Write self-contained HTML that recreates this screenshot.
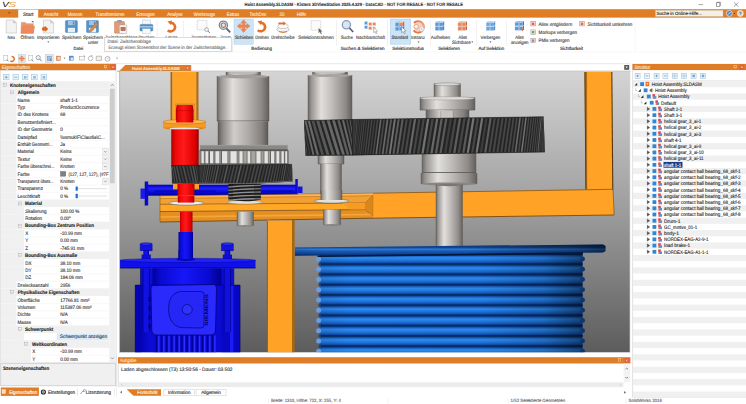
<!DOCTYPE html>
<html lang="de"><head><meta charset="utf-8"><title>Hoist Assembly.SLDASM - Kisters 3DViewStation</title>
<style>html,body{margin:0;padding:0;background:#fff;overflow:hidden}svg{display:block}</style>
</head><body>
<svg width="746" height="404" viewBox="0 0 746 404" font-family="'Liberation Sans', sans-serif" text-rendering="geometricPrecision">
<defs>
<linearGradient id="bg" x1="0" y1="0" x2="0" y2="1"><stop offset="0" stop-color="#d4d4d4"/><stop offset="0.5" stop-color="#9c9c9c"/><stop offset="1" stop-color="#5c5c5c"/></linearGradient>
<linearGradient id="cyl" x1="0" y1="0" x2="1" y2="0"><stop offset="0" stop-color="#6a6764"/><stop offset="0.08" stop-color="#9a9794"/><stop offset="0.3" stop-color="#e2e0dd"/><stop offset="0.55" stop-color="#bebbb8"/><stop offset="0.85" stop-color="#8e8b88"/><stop offset="1" stop-color="#63605d"/></linearGradient>
<linearGradient id="cyl2" x1="0" y1="0" x2="1" y2="0"><stop offset="0" stop-color="#605d5a"/><stop offset="0.1" stop-color="#8e8b88"/><stop offset="0.32" stop-color="#cfccc9"/><stop offset="0.6" stop-color="#aeaba8"/><stop offset="0.88" stop-color="#827f7c"/><stop offset="1" stop-color="#5a5754"/></linearGradient>
<linearGradient id="red" x1="0" y1="0" x2="1" y2="0"><stop offset="0" stop-color="#b00000"/><stop offset="0.15" stop-color="#f00808"/><stop offset="0.45" stop-color="#ff1a1a"/><stop offset="0.85" stop-color="#e00000"/><stop offset="1" stop-color="#a00000"/></linearGradient>
<linearGradient id="blu" x1="0" y1="0" x2="1" y2="0"><stop offset="0" stop-color="#00009a"/><stop offset="0.12" stop-color="#0a0ad0"/><stop offset="0.45" stop-color="#1616fa"/><stop offset="0.8" stop-color="#0a0ad4"/><stop offset="1" stop-color="#000090"/></linearGradient>
<linearGradient id="bluv" x1="0" y1="0" x2="0" y2="1"><stop offset="0" stop-color="#0000b8"/><stop offset="0.35" stop-color="#2020ff"/><stop offset="0.7" stop-color="#0808d0"/><stop offset="1" stop-color="#000090"/></linearGradient>
<linearGradient id="org" x1="0" y1="0" x2="1" y2="0"><stop offset="0" stop-color="#ffa024"/><stop offset="1" stop-color="#ff9c1c"/></linearGradient>
<linearGradient id="groove" x1="0" y1="0" x2="0" y2="1"><stop offset="0" stop-color="#041c46"/><stop offset="0.07" stop-color="#0a3a86"/><stop offset="0.2" stop-color="#1a66cc"/><stop offset="0.36" stop-color="#3090f4"/><stop offset="0.5" stop-color="#2480e4"/><stop offset="0.72" stop-color="#1a68d0"/><stop offset="0.87" stop-color="#0e48a0"/><stop offset="0.95" stop-color="#062a64"/><stop offset="1" stop-color="#041c46"/></linearGradient>
<linearGradient id="drumsh" x1="0" y1="0" x2="1" y2="0"><stop offset="0" stop-color="#000" stop-opacity="0.1"/><stop offset="0.12" stop-color="#000" stop-opacity="0"/><stop offset="0.62" stop-color="#000" stop-opacity="0.02"/><stop offset="0.85" stop-color="#000" stop-opacity="0.18"/><stop offset="1" stop-color="#000" stop-opacity="0.48"/></linearGradient>
<linearGradient id="flgsh" x1="0" y1="0" x2="1" y2="0"><stop offset="0" stop-color="#000" stop-opacity="0.1"/><stop offset="0.1" stop-color="#000" stop-opacity="0"/><stop offset="0.55" stop-color="#000" stop-opacity="0.02"/><stop offset="0.9" stop-color="#000" stop-opacity="0.38"/><stop offset="1" stop-color="#000" stop-opacity="0.58"/></linearGradient>
<linearGradient id="flg" x1="0" y1="0" x2="0" y2="1"><stop offset="0" stop-color="#0a2f6c"/><stop offset="0.3" stop-color="#114a9c"/><stop offset="0.42" stop-color="#2e80de"/><stop offset="0.55" stop-color="#1a60bc"/><stop offset="0.85" stop-color="#0e4290"/><stop offset="1" stop-color="#062456"/></linearGradient>
<pattern id="gr" x="0" y="264.3" width="40" height="10.25" patternUnits="userSpaceOnUse"><rect width="40" height="10.25" fill="url(#groove)"/></pattern>
<clipPath id="vp"><rect x="120" y="72" width="510" height="280.5"/></clipPath>
</defs>
<rect x="0.00" y="0.00" width="746.00" height="404.00" fill="#fff"/>
<g clip-path="url(#vp)">
<rect x="120.00" y="72.00" width="510.00" height="281.00" fill="url(#bg)"/>
<polygon points="584.50,71.00 587.50,71.00 587.50,190.00 585.50,190.00" fill="#b06a14"/>
<polygon points="587.30,71.00 611.50,71.00 612.50,190.00 587.30,190.00" fill="#ffa226"/>
<line x1="611.80" y1="71.00" x2="612.80" y2="190.00" stroke="#5a3608" stroke-width="1.10"/>
<line x1="584.90" y1="71.00" x2="585.90" y2="190.00" stroke="#5a3608" stroke-width="0.90"/>
<polygon points="170.50,71.00 172.60,71.00 172.60,124.00 170.50,124.00" fill="#a8660f"/>
<rect x="172.40" y="71.00" width="24.10" height="53.00" fill="#ffa226"/>
<rect x="196.30" y="71.00" width="2.20" height="53.00" fill="#b56a14"/>
<rect x="226.00" y="70.00" width="34.50" height="7.00" fill="url(#cyl)"/>
<line x1="226.00" y1="70.00" x2="226.00" y2="77.00" stroke="#55524f" stroke-width="0.40"/>
<line x1="260.50" y1="70.00" x2="260.50" y2="77.00" stroke="#55524f" stroke-width="0.40"/>
<ellipse cx="243.2" cy="73" rx="15" ry="1.6" fill="#bdbab6"/>
<rect x="217.00" y="76.00" width="52.00" height="45.00" fill="url(#cyl)"/>
<line x1="217.00" y1="76.00" x2="217.00" y2="121.00" stroke="#55524f" stroke-width="0.40"/>
<line x1="269.00" y1="76.00" x2="269.00" y2="121.00" stroke="#55524f" stroke-width="0.40"/>
<ellipse cx="243" cy="76.6" rx="26" ry="1.8" fill="#a29f9b"/>
<line x1="217.00" y1="121.00" x2="269.00" y2="121.00" stroke="#4a4846" stroke-width="0.70"/>
<rect x="218.00" y="121.30" width="50.00" height="23.70" fill="url(#cyl2)"/>
<line x1="218.00" y1="121.30" x2="218.00" y2="145.00" stroke="#55524f" stroke-width="0.40"/>
<line x1="268.00" y1="121.30" x2="268.00" y2="145.00" stroke="#55524f" stroke-width="0.40"/>
<rect x="312.50" y="70.00" width="35.00" height="6.00" fill="url(#cyl)"/>
<line x1="312.50" y1="70.00" x2="312.50" y2="76.00" stroke="#55524f" stroke-width="0.40"/>
<line x1="347.50" y1="70.00" x2="347.50" y2="76.00" stroke="#55524f" stroke-width="0.40"/>
<ellipse cx="330" cy="72.5" rx="15" ry="1.4" fill="#c4c1bd"/>
<rect x="308.00" y="75.00" width="44.00" height="46.00" fill="url(#cyl)"/>
<line x1="308.00" y1="75.00" x2="308.00" y2="121.00" stroke="#55524f" stroke-width="0.40"/>
<line x1="352.00" y1="75.00" x2="352.00" y2="121.00" stroke="#55524f" stroke-width="0.40"/>
<ellipse cx="330" cy="75.6" rx="22" ry="1.5" fill="#a8a5a1"/>
<rect x="434.00" y="83.50" width="26.50" height="14.50" fill="url(#cyl)"/>
<line x1="434.00" y1="83.50" x2="434.00" y2="98.00" stroke="#55524f" stroke-width="0.40"/>
<line x1="460.50" y1="83.50" x2="460.50" y2="98.00" stroke="#55524f" stroke-width="0.40"/>
<ellipse cx="447.2" cy="84.3" rx="13" ry="1.5" fill="#d8d6d3" stroke="#77736f" stroke-width="0.4"/>
<rect x="420.00" y="97.50" width="55.00" height="12.50" fill="url(#cyl)"/>
<line x1="420.00" y1="97.50" x2="420.00" y2="110.00" stroke="#55524f" stroke-width="0.40"/>
<line x1="475.00" y1="97.50" x2="475.00" y2="110.00" stroke="#55524f" stroke-width="0.40"/>
<ellipse cx="447.5" cy="98.3" rx="27.3" ry="1.6" fill="#dddbd8" stroke="#77736f" stroke-width="0.3"/>
<line x1="420.00" y1="110.00" x2="475.00" y2="110.00" stroke="#55524f" stroke-width="0.60"/>
<rect x="426.00" y="110.00" width="43.00" height="10.00" fill="url(#cyl2)"/>
<line x1="426.00" y1="110.00" x2="426.00" y2="120.00" stroke="#55524f" stroke-width="0.40"/>
<line x1="469.00" y1="110.00" x2="469.00" y2="120.00" stroke="#55524f" stroke-width="0.40"/>
<line x1="441.00" y1="111.00" x2="441.00" y2="119.00" stroke="#6a6662" stroke-width="0.50"/>
<line x1="453.00" y1="111.00" x2="453.00" y2="119.00" stroke="#6a6662" stroke-width="0.50"/>
<rect x="441.20" y="111.00" width="11.60" height="8.00" fill="#c9c6c2"/>
<rect x="318.00" y="154.00" width="26.00" height="10.00" fill="url(#cyl)"/>
<line x1="318.00" y1="154.00" x2="318.00" y2="164.00" stroke="#55524f" stroke-width="0.40"/>
<line x1="344.00" y1="154.00" x2="344.00" y2="164.00" stroke="#55524f" stroke-width="0.40"/>
<line x1="318.00" y1="164.00" x2="344.00" y2="164.00" stroke="#5a5754" stroke-width="0.50"/>
<rect x="320.50" y="164.00" width="21.00" height="35.50" fill="url(#cyl)"/>
<line x1="320.50" y1="164.00" x2="320.50" y2="199.50" stroke="#55524f" stroke-width="0.40"/>
<line x1="341.50" y1="164.00" x2="341.50" y2="199.50" stroke="#55524f" stroke-width="0.40"/>
<rect x="422.00" y="153.00" width="54.00" height="19.50" fill="url(#cyl)"/>
<line x1="422.00" y1="153.00" x2="422.00" y2="172.50" stroke="#55524f" stroke-width="0.40"/>
<line x1="476.00" y1="153.00" x2="476.00" y2="172.50" stroke="#55524f" stroke-width="0.40"/>
<line x1="422.00" y1="172.50" x2="476.00" y2="172.50" stroke="#4a4744" stroke-width="0.70"/>
<rect x="421.00" y="173.00" width="56.00" height="11.00" fill="url(#cyl)"/>
<line x1="421.00" y1="173.00" x2="421.00" y2="184.00" stroke="#55524f" stroke-width="0.40"/>
<line x1="477.00" y1="173.00" x2="477.00" y2="184.00" stroke="#55524f" stroke-width="0.40"/>
<ellipse cx="449" cy="184" rx="28" ry="1.5" fill="#8a8682"/>
<clipPath id="g1"><polygon points="304.00,120.50 352.50,119.50 352.50,155.20 305.50,155.60"/></clipPath>
<polygon points="304.00,120.50 352.50,119.50 352.50,155.20 305.50,155.60" fill="#242424"/>
<g clip-path="url(#g1)">
<line x1="301.21" y1="118.00" x2="305.90" y2="157.00" stroke="#505050" stroke-width="0.35"/>
<line x1="301.29" y1="118.00" x2="307.60" y2="157.00" stroke="#505050" stroke-width="0.79"/>
<line x1="302.51" y1="118.00" x2="310.33" y2="157.00" stroke="#3e3e3e" stroke-width="1.37"/>
<line x1="304.79" y1="118.00" x2="313.97" y2="157.00" stroke="#686868" stroke-width="1.88"/>
<line x1="308.05" y1="118.00" x2="318.37" y2="157.00" stroke="#686868" stroke-width="2.31"/>
<line x1="312.13" y1="118.00" x2="323.33" y2="157.00" stroke="#505050" stroke-width="2.64"/>
<line x1="316.86" y1="118.00" x2="328.63" y2="157.00" stroke="#5a5a5a" stroke-width="2.86"/>
<line x1="322.04" y1="118.00" x2="334.03" y2="157.00" stroke="#5e5e5e" stroke-width="2.94"/>
<line x1="327.43" y1="118.00" x2="339.31" y2="157.00" stroke="#686868" stroke-width="2.90"/>
<line x1="332.79" y1="118.00" x2="344.23" y2="157.00" stroke="#686868" stroke-width="2.73"/>
<line x1="337.90" y1="118.00" x2="348.57" y2="157.00" stroke="#5e5e5e" stroke-width="2.44"/>
<line x1="342.52" y1="118.00" x2="352.14" y2="157.00" stroke="#686868" stroke-width="2.05"/>
<line x1="346.46" y1="118.00" x2="354.79" y2="157.00" stroke="#505050" stroke-width="1.56"/>
<line x1="349.53" y1="118.00" x2="356.40" y2="157.00" stroke="#5a5a5a" stroke-width="1.01"/>
<line x1="351.62" y1="118.00" x2="356.89" y2="157.00" stroke="#5a5a5a" stroke-width="0.41"/>
</g>
<clipPath id="g2"><polygon points="352.50,119.50 543.50,116.80 545.00,152.00 352.50,155.20"/></clipPath>
<polygon points="352.50,119.50 543.50,116.80 545.00,152.00 352.50,155.20" fill="#242424"/>
<g clip-path="url(#g2)">
<line x1="352.77" y1="115.00" x2="350.25" y2="157.00" stroke="#3e3e3e" stroke-width="0.35"/>
<line x1="353.04" y1="115.00" x2="350.32" y2="157.00" stroke="#474747" stroke-width="0.35"/>
<line x1="353.54" y1="115.00" x2="350.60" y2="157.00" stroke="#747474" stroke-width="0.35"/>
<line x1="354.24" y1="115.00" x2="351.09" y2="157.00" stroke="#474747" stroke-width="0.35"/>
<line x1="355.16" y1="115.00" x2="351.79" y2="157.00" stroke="#5a5a5a" stroke-width="0.46"/>
<line x1="356.28" y1="115.00" x2="352.71" y2="157.00" stroke="#474747" stroke-width="0.56"/>
<line x1="357.61" y1="115.00" x2="353.83" y2="157.00" stroke="#5a5a5a" stroke-width="0.67"/>
<line x1="359.14" y1="115.00" x2="355.16" y2="157.00" stroke="#3e3e3e" stroke-width="0.77"/>
<line x1="360.88" y1="115.00" x2="356.70" y2="157.00" stroke="#3e3e3e" stroke-width="0.87"/>
<line x1="362.81" y1="115.00" x2="358.43" y2="157.00" stroke="#474747" stroke-width="0.96"/>
<line x1="364.93" y1="115.00" x2="360.36" y2="157.00" stroke="#474747" stroke-width="1.06"/>
<line x1="367.24" y1="115.00" x2="362.48" y2="157.00" stroke="#3e3e3e" stroke-width="1.15"/>
<line x1="369.73" y1="115.00" x2="364.79" y2="157.00" stroke="#474747" stroke-width="1.25"/>
<line x1="372.40" y1="115.00" x2="367.29" y2="157.00" stroke="#474747" stroke-width="1.33"/>
<line x1="375.24" y1="115.00" x2="369.95" y2="157.00" stroke="#3e3e3e" stroke-width="1.42"/>
<line x1="378.24" y1="115.00" x2="372.79" y2="157.00" stroke="#474747" stroke-width="1.50"/>
<line x1="381.40" y1="115.00" x2="375.80" y2="157.00" stroke="#686868" stroke-width="1.58"/>
<line x1="384.71" y1="115.00" x2="378.96" y2="157.00" stroke="#474747" stroke-width="1.66"/>
<line x1="388.17" y1="115.00" x2="382.27" y2="157.00" stroke="#686868" stroke-width="1.73"/>
<line x1="391.76" y1="115.00" x2="385.73" y2="157.00" stroke="#5a5a5a" stroke-width="1.80"/>
<line x1="395.48" y1="115.00" x2="389.32" y2="157.00" stroke="#747474" stroke-width="1.86"/>
<line x1="399.32" y1="115.00" x2="393.04" y2="157.00" stroke="#5e5e5e" stroke-width="1.92"/>
<line x1="403.27" y1="115.00" x2="396.88" y2="157.00" stroke="#5e5e5e" stroke-width="1.98"/>
<line x1="407.33" y1="115.00" x2="400.83" y2="157.00" stroke="#474747" stroke-width="2.03"/>
<line x1="411.47" y1="115.00" x2="404.88" y2="157.00" stroke="#474747" stroke-width="2.07"/>
<line x1="415.70" y1="115.00" x2="409.03" y2="157.00" stroke="#686868" stroke-width="2.12"/>
<line x1="420.01" y1="115.00" x2="413.26" y2="157.00" stroke="#474747" stroke-width="2.15"/>
<line x1="424.38" y1="115.00" x2="417.57" y2="157.00" stroke="#474747" stroke-width="2.19"/>
<line x1="428.81" y1="115.00" x2="421.94" y2="157.00" stroke="#747474" stroke-width="2.21"/>
<line x1="433.29" y1="115.00" x2="426.37" y2="157.00" stroke="#474747" stroke-width="2.24"/>
<line x1="437.80" y1="115.00" x2="430.85" y2="157.00" stroke="#686868" stroke-width="2.26"/>
<line x1="442.33" y1="115.00" x2="435.36" y2="157.00" stroke="#5e5e5e" stroke-width="2.27"/>
<line x1="446.89" y1="115.00" x2="439.89" y2="157.00" stroke="#5a5a5a" stroke-width="2.28"/>
<line x1="451.45" y1="115.00" x2="444.45" y2="157.00" stroke="#3e3e3e" stroke-width="2.28"/>
<line x1="456.00" y1="115.00" x2="449.01" y2="157.00" stroke="#474747" stroke-width="2.28"/>
<line x1="460.55" y1="115.00" x2="453.56" y2="157.00" stroke="#5e5e5e" stroke-width="2.27"/>
<line x1="465.06" y1="115.00" x2="458.11" y2="157.00" stroke="#474747" stroke-width="2.26"/>
<line x1="469.55" y1="115.00" x2="462.62" y2="157.00" stroke="#5a5a5a" stroke-width="2.24"/>
<line x1="473.99" y1="115.00" x2="467.11" y2="157.00" stroke="#747474" stroke-width="2.22"/>
<line x1="478.38" y1="115.00" x2="471.55" y2="157.00" stroke="#474747" stroke-width="2.19"/>
<line x1="482.70" y1="115.00" x2="475.93" y2="157.00" stroke="#747474" stroke-width="2.16"/>
<line x1="486.95" y1="115.00" x2="480.26" y2="157.00" stroke="#3e3e3e" stroke-width="2.12"/>
<line x1="491.12" y1="115.00" x2="484.51" y2="157.00" stroke="#5e5e5e" stroke-width="2.08"/>
<line x1="495.20" y1="115.00" x2="488.68" y2="157.00" stroke="#474747" stroke-width="2.04"/>
<line x1="499.17" y1="115.00" x2="492.75" y2="157.00" stroke="#474747" stroke-width="1.99"/>
<line x1="503.04" y1="115.00" x2="496.73" y2="157.00" stroke="#474747" stroke-width="1.93"/>
<line x1="506.79" y1="115.00" x2="500.60" y2="157.00" stroke="#474747" stroke-width="1.87"/>
<line x1="510.41" y1="115.00" x2="504.35" y2="157.00" stroke="#474747" stroke-width="1.81"/>
<line x1="513.90" y1="115.00" x2="507.97" y2="157.00" stroke="#474747" stroke-width="1.74"/>
<line x1="517.25" y1="115.00" x2="511.46" y2="157.00" stroke="#474747" stroke-width="1.67"/>
<line x1="520.45" y1="115.00" x2="514.81" y2="157.00" stroke="#686868" stroke-width="1.60"/>
<line x1="523.49" y1="115.00" x2="518.01" y2="157.00" stroke="#474747" stroke-width="1.52"/>
<line x1="526.37" y1="115.00" x2="521.05" y2="157.00" stroke="#747474" stroke-width="1.44"/>
<line x1="529.08" y1="115.00" x2="523.93" y2="157.00" stroke="#474747" stroke-width="1.35"/>
<line x1="531.62" y1="115.00" x2="526.64" y2="157.00" stroke="#474747" stroke-width="1.27"/>
<line x1="533.97" y1="115.00" x2="529.17" y2="157.00" stroke="#474747" stroke-width="1.18"/>
<line x1="536.14" y1="115.00" x2="531.53" y2="157.00" stroke="#474747" stroke-width="1.08"/>
<line x1="538.12" y1="115.00" x2="533.70" y2="157.00" stroke="#474747" stroke-width="0.99"/>
<line x1="539.90" y1="115.00" x2="535.67" y2="157.00" stroke="#474747" stroke-width="0.89"/>
<line x1="541.48" y1="115.00" x2="537.45" y2="157.00" stroke="#747474" stroke-width="0.79"/>
<line x1="542.86" y1="115.00" x2="539.04" y2="157.00" stroke="#474747" stroke-width="0.69"/>
<line x1="544.04" y1="115.00" x2="540.42" y2="157.00" stroke="#474747" stroke-width="0.59"/>
<line x1="545.00" y1="115.00" x2="541.59" y2="157.00" stroke="#5e5e5e" stroke-width="0.48"/>
<line x1="545.76" y1="115.00" x2="542.56" y2="157.00" stroke="#474747" stroke-width="0.38"/>
<line x1="546.30" y1="115.00" x2="543.31" y2="157.00" stroke="#5a5a5a" stroke-width="0.35"/>
<line x1="546.64" y1="115.00" x2="543.86" y2="157.00" stroke="#686868" stroke-width="0.35"/>
<line x1="546.75" y1="115.00" x2="544.19" y2="157.00" stroke="#474747" stroke-width="0.35"/>
</g>
<line x1="352.50" y1="119.50" x2="352.50" y2="155.20" stroke="#111" stroke-width="0.60"/>
<line x1="304.00" y1="120.50" x2="352.50" y2="119.50" stroke="#111" stroke-width="0.50"/>
<line x1="352.50" y1="119.50" x2="543.50" y2="116.80" stroke="#111" stroke-width="0.50"/>
<line x1="305.50" y1="155.40" x2="352.50" y2="155.00" stroke="#151515" stroke-width="0.60"/>
<line x1="352.50" y1="155.00" x2="545.00" y2="152.00" stroke="#151515" stroke-width="0.60"/>
<rect x="200.20" y="145.00" width="87.40" height="4.60" fill="#8a8886"/>
<line x1="200.20" y1="145.30" x2="287.60" y2="145.30" stroke="#a9a7a4" stroke-width="0.60"/>
<line x1="200.20" y1="149.60" x2="287.60" y2="149.60" stroke="#4a4846" stroke-width="0.70"/>
<rect x="199.80" y="150.00" width="88.40" height="14.40" fill="#a6a4a1"/>
<rect x="200.60" y="151.20" width="0.90" height="12.40" fill="#5e5c5a"/>
<rect x="201.50" y="151.20" width="2.40" height="12.40" fill="#e4e3e1"/>
<rect x="203.90" y="151.20" width="1.40" height="12.40" fill="#8a8886"/>
<rect x="204.60" y="151.20" width="0.90" height="12.40" fill="#5e5c5a"/>
<rect x="205.50" y="151.20" width="2.60" height="12.40" fill="#e4e3e1"/>
<rect x="208.10" y="151.20" width="1.40" height="12.40" fill="#8a8886"/>
<rect x="209.10" y="151.20" width="0.90" height="12.40" fill="#5e5c5a"/>
<rect x="210.00" y="151.20" width="3.20" height="12.40" fill="#e4e3e1"/>
<rect x="213.20" y="151.20" width="1.40" height="12.40" fill="#8a8886"/>
<rect x="214.60" y="151.20" width="0.90" height="12.40" fill="#5e5c5a"/>
<rect x="215.50" y="151.20" width="3.80" height="12.40" fill="#e4e3e1"/>
<rect x="219.30" y="151.20" width="1.40" height="12.40" fill="#8a8886"/>
<rect x="221.10" y="151.20" width="0.90" height="12.40" fill="#5e5c5a"/>
<rect x="222.00" y="151.20" width="5.40" height="12.40" fill="#e4e3e1"/>
<rect x="227.40" y="151.20" width="1.40" height="12.40" fill="#8a8886"/>
<rect x="229.60" y="151.20" width="0.90" height="12.40" fill="#5e5c5a"/>
<rect x="230.50" y="151.20" width="6.20" height="12.40" fill="#e4e3e1"/>
<rect x="236.70" y="151.20" width="1.40" height="12.40" fill="#8a8886"/>
<rect x="238.60" y="151.20" width="0.90" height="12.40" fill="#5e5c5a"/>
<rect x="239.50" y="151.20" width="3.20" height="12.40" fill="#e4e3e1"/>
<rect x="242.70" y="151.20" width="1.40" height="12.40" fill="#8a8886"/>
<rect x="246.70" y="151.20" width="0.90" height="12.40" fill="#5e5c5a"/>
<rect x="247.60" y="151.20" width="2.60" height="12.40" fill="#e4e3e1"/>
<rect x="250.20" y="151.20" width="1.40" height="12.40" fill="#8a8886"/>
<rect x="255.60" y="151.20" width="0.90" height="12.40" fill="#5e5c5a"/>
<rect x="256.50" y="151.20" width="4.20" height="12.40" fill="#e4e3e1"/>
<rect x="260.70" y="151.20" width="1.40" height="12.40" fill="#8a8886"/>
<rect x="263.60" y="151.20" width="0.90" height="12.40" fill="#5e5c5a"/>
<rect x="264.50" y="151.20" width="3.40" height="12.40" fill="#e4e3e1"/>
<rect x="267.90" y="151.20" width="1.40" height="12.40" fill="#8a8886"/>
<rect x="270.10" y="151.20" width="0.90" height="12.40" fill="#5e5c5a"/>
<rect x="271.00" y="151.20" width="3.20" height="12.40" fill="#e4e3e1"/>
<rect x="274.20" y="151.20" width="1.40" height="12.40" fill="#8a8886"/>
<rect x="275.60" y="151.20" width="0.90" height="12.40" fill="#5e5c5a"/>
<rect x="276.50" y="151.20" width="2.80" height="12.40" fill="#e4e3e1"/>
<rect x="279.30" y="151.20" width="1.40" height="12.40" fill="#8a8886"/>
<rect x="280.60" y="151.20" width="0.90" height="12.40" fill="#5e5c5a"/>
<rect x="281.50" y="151.20" width="2.40" height="12.40" fill="#e4e3e1"/>
<rect x="283.90" y="151.20" width="1.40" height="12.40" fill="#8a8886"/>
<rect x="284.40" y="151.20" width="0.90" height="12.40" fill="#5e5c5a"/>
<rect x="285.30" y="151.20" width="1.80" height="12.40" fill="#e4e3e1"/>
<rect x="287.10" y="151.20" width="1.40" height="12.40" fill="#8a8886"/>
<line x1="199.80" y1="150.60" x2="288.20" y2="150.60" stroke="#4a4846" stroke-width="0.90"/>
<line x1="199.80" y1="164.00" x2="288.20" y2="164.00" stroke="#3a3836" stroke-width="0.90"/>
<line x1="199.80" y1="150.00" x2="199.80" y2="164.40" stroke="#55524f" stroke-width="0.50"/>
<line x1="288.20" y1="150.00" x2="288.20" y2="164.40" stroke="#55524f" stroke-width="0.50"/>
<rect x="175.00" y="104.00" width="20.00" height="17.50" fill="#e8932a"/>
<line x1="175.00" y1="104.00" x2="195.00" y2="104.00" stroke="#a8660f" stroke-width="0.40"/>
<path d="M177.6,105 h14.2 q1,0 1.1,1 l0.6,4.4 v11 h-17.6 v-11 l0.6,-4.4 q0.1,-1 1.1,-1 z" fill="url(#red)"/>
<line x1="176.00" y1="110.60" x2="193.50" y2="110.60" stroke="#c00000" stroke-width="0.50"/>
<ellipse cx="184.5" cy="127.5" rx="21.5" ry="2.8" fill="#d98518"/>
<rect x="163.00" y="121.50" width="43.00" height="6.00" fill="#f59a22"/>
<ellipse cx="184.5" cy="121.8" rx="21.5" ry="2.2" fill="#ffb548" stroke="#a8660f" stroke-width="0.4"/>
<rect x="176.20" y="119.00" width="17.10" height="3.50" fill="url(#red)"/>
<ellipse cx="184.5" cy="129" rx="15" ry="1.6" fill="#e8e6e3"/>
<rect x="171.50" y="129.30" width="27.00" height="37.70" fill="url(#red)"/>
<line x1="171.50" y1="129.30" x2="171.50" y2="167.00" stroke="#800000" stroke-width="0.40"/>
<line x1="198.50" y1="129.30" x2="198.50" y2="167.00" stroke="#800000" stroke-width="0.40"/>
<clipPath id="g3"><polygon points="171.50,165.60 199.00,165.20 199.00,183.70 172.00,183.50"/></clipPath>
<polygon points="171.50,165.60 199.00,165.20 199.00,183.70 172.00,183.50" fill="#242424"/>
<g clip-path="url(#g3)">
<line x1="170.24" y1="163.00" x2="172.44" y2="186.00" stroke="#3e3e3e" stroke-width="0.35"/>
<line x1="170.49" y1="163.00" x2="173.56" y2="186.00" stroke="#4c4c4c" stroke-width="0.55"/>
<line x1="171.60" y1="163.00" x2="175.47" y2="186.00" stroke="#4c4c4c" stroke-width="0.94"/>
<line x1="173.49" y1="163.00" x2="178.04" y2="186.00" stroke="#4c4c4c" stroke-width="1.28"/>
<line x1="176.05" y1="163.00" x2="181.12" y2="186.00" stroke="#4c4c4c" stroke-width="1.53"/>
<line x1="179.12" y1="163.00" x2="184.51" y2="186.00" stroke="#3e3e3e" stroke-width="1.69"/>
<line x1="182.51" y1="163.00" x2="188.01" y2="186.00" stroke="#4c4c4c" stroke-width="1.74"/>
<line x1="186.00" y1="163.00" x2="191.39" y2="186.00" stroke="#3e3e3e" stroke-width="1.68"/>
<line x1="189.39" y1="163.00" x2="194.44" y2="186.00" stroke="#4c4c4c" stroke-width="1.52"/>
<line x1="192.45" y1="163.00" x2="196.98" y2="186.00" stroke="#5a5a5a" stroke-width="1.27"/>
<line x1="195.01" y1="163.00" x2="198.85" y2="186.00" stroke="#4c4c4c" stroke-width="0.93"/>
<line x1="196.89" y1="163.00" x2="199.93" y2="186.00" stroke="#3e3e3e" stroke-width="0.54"/>
<line x1="197.99" y1="163.00" x2="200.15" y2="186.00" stroke="#4c4c4c" stroke-width="0.35"/>
</g>
<clipPath id="g4"><polygon points="199.00,165.20 292.00,164.40 292.50,181.60 245.00,184.20 199.00,183.70"/></clipPath>
<polygon points="199.00,165.20 292.00,164.40 292.50,181.60 245.00,184.20 199.00,183.70" fill="#242424"/>
<g clip-path="url(#g4)">
<line x1="199.51" y1="163.00" x2="197.51" y2="186.00" stroke="#5a5a5a" stroke-width="0.35"/>
<line x1="199.85" y1="163.00" x2="197.58" y2="186.00" stroke="#484848" stroke-width="0.35"/>
<line x1="200.44" y1="163.00" x2="197.91" y2="186.00" stroke="#5a5a5a" stroke-width="0.35"/>
<line x1="201.29" y1="163.00" x2="198.50" y2="186.00" stroke="#484848" stroke-width="0.40"/>
<line x1="202.38" y1="163.00" x2="199.34" y2="186.00" stroke="#5a5a5a" stroke-width="0.52"/>
<line x1="203.71" y1="163.00" x2="200.42" y2="186.00" stroke="#3e3e3e" stroke-width="0.64"/>
<line x1="205.28" y1="163.00" x2="201.75" y2="186.00" stroke="#5a5a5a" stroke-width="0.75"/>
<line x1="207.07" y1="163.00" x2="203.31" y2="186.00" stroke="#484848" stroke-width="0.86"/>
<line x1="209.08" y1="163.00" x2="205.10" y2="186.00" stroke="#5a5a5a" stroke-width="0.96"/>
<line x1="211.30" y1="163.00" x2="207.10" y2="186.00" stroke="#484848" stroke-width="1.06"/>
<line x1="213.70" y1="163.00" x2="209.31" y2="186.00" stroke="#484848" stroke-width="1.15"/>
<line x1="216.29" y1="163.00" x2="211.71" y2="186.00" stroke="#484848" stroke-width="1.24"/>
<line x1="219.04" y1="163.00" x2="214.29" y2="186.00" stroke="#5a5a5a" stroke-width="1.32"/>
<line x1="221.94" y1="163.00" x2="217.03" y2="186.00" stroke="#3e3e3e" stroke-width="1.39"/>
<line x1="224.97" y1="163.00" x2="219.93" y2="186.00" stroke="#3e3e3e" stroke-width="1.45"/>
<line x1="228.12" y1="163.00" x2="222.96" y2="186.00" stroke="#5a5a5a" stroke-width="1.51"/>
<line x1="231.37" y1="163.00" x2="226.11" y2="186.00" stroke="#3e3e3e" stroke-width="1.56"/>
<line x1="234.71" y1="163.00" x2="229.36" y2="186.00" stroke="#484848" stroke-width="1.60"/>
<line x1="238.11" y1="163.00" x2="232.69" y2="186.00" stroke="#484848" stroke-width="1.63"/>
<line x1="241.55" y1="163.00" x2="236.09" y2="186.00" stroke="#5a5a5a" stroke-width="1.65"/>
<line x1="245.02" y1="163.00" x2="239.53" y2="186.00" stroke="#3e3e3e" stroke-width="1.67"/>
<line x1="248.50" y1="163.00" x2="243.00" y2="186.00" stroke="#484848" stroke-width="1.67"/>
<line x1="251.97" y1="163.00" x2="246.48" y2="186.00" stroke="#3e3e3e" stroke-width="1.66"/>
<line x1="255.41" y1="163.00" x2="249.95" y2="186.00" stroke="#484848" stroke-width="1.65"/>
<line x1="258.80" y1="163.00" x2="253.39" y2="186.00" stroke="#484848" stroke-width="1.63"/>
<line x1="262.12" y1="163.00" x2="256.78" y2="186.00" stroke="#484848" stroke-width="1.59"/>
<line x1="265.36" y1="163.00" x2="260.11" y2="186.00" stroke="#3e3e3e" stroke-width="1.55"/>
<line x1="268.49" y1="163.00" x2="263.35" y2="186.00" stroke="#484848" stroke-width="1.50"/>
<line x1="271.50" y1="163.00" x2="266.48" y2="186.00" stroke="#484848" stroke-width="1.45"/>
<line x1="274.38" y1="163.00" x2="269.50" y2="186.00" stroke="#484848" stroke-width="1.38"/>
<line x1="277.10" y1="163.00" x2="272.38" y2="186.00" stroke="#484848" stroke-width="1.31"/>
<line x1="279.65" y1="163.00" x2="275.10" y2="186.00" stroke="#484848" stroke-width="1.23"/>
<line x1="282.03" y1="163.00" x2="277.66" y2="186.00" stroke="#3e3e3e" stroke-width="1.14"/>
<line x1="284.21" y1="163.00" x2="280.04" y2="186.00" stroke="#484848" stroke-width="1.05"/>
<line x1="286.18" y1="163.00" x2="282.22" y2="186.00" stroke="#5a5a5a" stroke-width="0.95"/>
<line x1="287.93" y1="163.00" x2="284.20" y2="186.00" stroke="#3e3e3e" stroke-width="0.84"/>
<line x1="289.46" y1="163.00" x2="285.96" y2="186.00" stroke="#484848" stroke-width="0.73"/>
<line x1="290.75" y1="163.00" x2="287.50" y2="186.00" stroke="#484848" stroke-width="0.62"/>
<line x1="291.80" y1="163.00" x2="288.79" y2="186.00" stroke="#5a5a5a" stroke-width="0.51"/>
<line x1="292.60" y1="163.00" x2="289.85" y2="186.00" stroke="#484848" stroke-width="0.39"/>
<line x1="293.15" y1="163.00" x2="290.66" y2="186.00" stroke="#484848" stroke-width="0.35"/>
<line x1="293.44" y1="163.00" x2="291.21" y2="186.00" stroke="#3e3e3e" stroke-width="0.35"/>
<line x1="293.48" y1="163.00" x2="291.51" y2="186.00" stroke="#484848" stroke-width="0.35"/>
</g>
<line x1="171.50" y1="165.60" x2="199.00" y2="165.20" stroke="#111" stroke-width="0.50"/>
<line x1="199.00" y1="165.20" x2="292.00" y2="164.40" stroke="#111" stroke-width="0.50"/>
<line x1="199.00" y1="165.20" x2="199.00" y2="183.70" stroke="#101010" stroke-width="0.60"/>
<path d="M199,183.2 Q245,185.2 292.5,181.2" fill="none" stroke="#666" stroke-width="1"/>
<rect x="148.00" y="184.70" width="148.00" height="11.00" fill="url(#bluv)"/>
<line x1="155.00" y1="191.00" x2="216.00" y2="191.00" stroke="#000088" stroke-width="0.80"/>
<line x1="262.00" y1="191.00" x2="292.00" y2="191.00" stroke="#000088" stroke-width="0.80"/>
<rect x="145.00" y="181.50" width="3.20" height="24.00" fill="#0a0ad0"/>
<line x1="145.00" y1="181.50" x2="145.00" y2="205.50" stroke="#000070" stroke-width="0.50"/>
<rect x="140.50" y="188.50" width="4.50" height="10.30" fill="#1a1ae8"/>
<rect x="295.30" y="179.00" width="2.50" height="19.00" fill="#0a0ad0"/>
<rect x="297.80" y="186.50" width="4.70" height="6.50" fill="#1414e0"/>
<rect x="173.00" y="184.00" width="26.00" height="5.40" fill="#f5a030"/>
<line x1="173.00" y1="189.40" x2="199.00" y2="189.40" stroke="#8a5410" stroke-width="0.40"/>
<rect x="177.50" y="184.00" width="17.00" height="18.50" fill="url(#red)"/>
<polygon points="373.00,193.20 586.00,189.60 612.50,189.30 614.00,215.00 373.00,218.20" fill="#ffa226"/>
<line x1="373.00" y1="193.20" x2="612.50" y2="189.30" stroke="#8a5410" stroke-width="0.80"/>
<line x1="373.00" y1="218.20" x2="614.00" y2="215.00" stroke="#7a4a0e" stroke-width="0.90"/>
<line x1="613.00" y1="189.30" x2="614.20" y2="215.00" stroke="#8a5410" stroke-width="0.70"/>
<polygon points="159.50,196.00 300.00,195.00 373.00,193.20 373.00,203.00 160.00,204.50" fill="#f2a033"/>
<line x1="159.50" y1="196.00" x2="373.00" y2="193.20" stroke="#8a5410" stroke-width="0.60"/>
<polygon points="159.50,196.20 373.00,193.40 373.00,195.60 159.80,198.40" fill="#ffb454"/>
<line x1="159.80" y1="198.60" x2="373.00" y2="195.80" stroke="#a8680f" stroke-width="0.50"/>
<polygon points="160.00,204.30 365.00,203.00 365.00,209.60 160.00,211.60" fill="#ffa828"/>
<line x1="160.00" y1="204.30" x2="365.00" y2="203.00" stroke="#7a4a0e" stroke-width="0.60"/>
<polygon points="160.00,211.60 365.00,209.60 373.00,215.60 373.00,218.20 160.00,222.00" fill="#e48f22"/>
<line x1="160.00" y1="211.60" x2="365.00" y2="209.60" stroke="#7a4a0e" stroke-width="0.70"/>
<line x1="160.00" y1="217.00" x2="373.00" y2="214.50" stroke="#f5a63a" stroke-width="1.60"/>
<line x1="160.00" y1="222.00" x2="373.00" y2="218.20" stroke="#6a400a" stroke-width="0.80"/>
<line x1="160.00" y1="196.00" x2="160.00" y2="222.00" stroke="#8a5410" stroke-width="0.60"/>
<polygon points="365.00,203.00 373.00,195.20 373.00,215.80 365.00,209.60" fill="#d9861c"/>
<line x1="365.00" y1="203.00" x2="373.00" y2="195.20" stroke="#8f560c" stroke-width="0.40"/>
<line x1="365.00" y1="209.60" x2="373.00" y2="215.80" stroke="#8f560c" stroke-width="0.40"/>
<line x1="373.00" y1="195.00" x2="373.00" y2="216.00" stroke="#b06c14" stroke-width="0.40"/>
<polygon points="342.00,203.00 365.00,203.00 365.00,209.60 350.00,209.60" fill="#f79c22"/>
<ellipse cx="245" cy="202.2" rx="17.6" ry="1.9" fill="#e2e0dd" stroke="#6a6764" stroke-width="0.4"/>
<path d="M228.4,184 h32.4 v15.6 q-16.2,3.4 -32.4,0 z" fill="#1c1c1c"/>
<path d="M228.4,187.00 Q244.6,185.80 260.8,185.40" stroke="#7c7c7c" stroke-width="1.3" fill="none"/>
<path d="M233,186.40 Q244.6,185.50 254,185.40" stroke="#a4a4a4" stroke-width="0.6" fill="none"/>
<path d="M228.4,190.30 Q244.6,189.10 260.8,188.70" stroke="#7c7c7c" stroke-width="1.3" fill="none"/>
<path d="M233,189.70 Q244.6,188.80 254,188.70" stroke="#a4a4a4" stroke-width="0.6" fill="none"/>
<path d="M228.4,193.60 Q244.6,192.40 260.8,192.00" stroke="#7c7c7c" stroke-width="1.3" fill="none"/>
<path d="M233,193.00 Q244.6,192.10 254,192.00" stroke="#a4a4a4" stroke-width="0.6" fill="none"/>
<path d="M228.4,196.90 Q244.6,195.70 260.8,195.30" stroke="#7c7c7c" stroke-width="1.3" fill="none"/>
<path d="M233,196.30 Q244.6,195.40 254,195.30" stroke="#a4a4a4" stroke-width="0.6" fill="none"/>
<path d="M228.4,200.20 Q244.6,199.00 260.8,198.60" stroke="#7c7c7c" stroke-width="1.3" fill="none"/>
<path d="M233,199.60 Q244.6,198.70 254,198.60" stroke="#a4a4a4" stroke-width="0.6" fill="none"/>
<rect x="436.00" y="184.50" width="26.50" height="62.50" fill="url(#cyl)"/>
<line x1="436.00" y1="184.50" x2="436.00" y2="247.00" stroke="#55524f" stroke-width="0.40"/>
<line x1="462.50" y1="184.50" x2="462.50" y2="247.00" stroke="#55524f" stroke-width="0.40"/>
<ellipse cx="449.2" cy="185" rx="13.2" ry="1.2" fill="#7a7672"/>
<ellipse cx="186.5" cy="203" rx="17.3" ry="2.1" fill="#f2f1ef" stroke="#55524f" stroke-width="0.5"/>
<rect x="177.80" y="196.00" width="16.50" height="6.60" fill="url(#red)"/>
<ellipse cx="331.5" cy="201" rx="17.3" ry="2.1" fill="#e4e2df" stroke="#55524f" stroke-width="0.5"/>
<rect x="320.80" y="190.00" width="21.20" height="10.00" fill="url(#cyl)"/>
<line x1="320.80" y1="190.00" x2="320.80" y2="200.00" stroke="#55524f" stroke-width="0.40"/>
<line x1="342.00" y1="190.00" x2="342.00" y2="200.00" stroke="#55524f" stroke-width="0.40"/>
<rect x="237.00" y="211.80" width="16.50" height="14.20" fill="url(#cyl)"/>
<line x1="237.00" y1="211.80" x2="237.00" y2="226.00" stroke="#55524f" stroke-width="0.40"/>
<line x1="253.50" y1="211.80" x2="253.50" y2="226.00" stroke="#55524f" stroke-width="0.40"/>
<ellipse cx="245.2" cy="226" rx="8.2" ry="1" fill="#8a8682"/>
<rect x="323.50" y="209.60" width="17.10" height="15.40" fill="url(#cyl)"/>
<line x1="323.50" y1="209.60" x2="323.50" y2="225.00" stroke="#55524f" stroke-width="0.40"/>
<line x1="340.60" y1="209.60" x2="340.60" y2="225.00" stroke="#55524f" stroke-width="0.40"/>
<ellipse cx="332" cy="225" rx="8.5" ry="1" fill="#8a8682"/>
<rect x="180.00" y="211.60" width="12.50" height="20.90" fill="url(#red)"/>
<rect x="267.00" y="220.50" width="25.20" height="132.50" fill="#ffa226"/>
<line x1="267.40" y1="221.00" x2="267.40" y2="353.00" stroke="#8a5410" stroke-width="0.90"/>
<rect x="292.00" y="220.00" width="2.60" height="133.00" fill="#a8660f"/>
<rect x="178.50" y="232.00" width="14.50" height="27.00" fill="url(#blu)"/>
<rect x="143.40" y="249.00" width="5.60" height="11.00" fill="url(#blu)"/>
<rect x="141.60" y="254.60" width="9.20" height="5.00" fill="#0c0cd4"/>
<rect x="140.20" y="243.60" width="12.00" height="7.00" fill="#1212e6"/>
<ellipse cx="146.2" cy="244" rx="6" ry="1.3" fill="#2c2cff" stroke="#000080" stroke-width="0.4"/>
<line x1="140.20" y1="250.60" x2="152.20" y2="250.60" stroke="#000078" stroke-width="0.60"/>
<line x1="140.20" y1="244.00" x2="140.20" y2="250.60" stroke="#000078" stroke-width="0.40"/>
<line x1="152.20" y1="244.00" x2="152.20" y2="250.60" stroke="#000078" stroke-width="0.40"/>
<rect x="224.60" y="249.00" width="5.60" height="11.00" fill="url(#blu)"/>
<rect x="222.80" y="254.60" width="9.20" height="5.00" fill="#0c0cd4"/>
<rect x="221.40" y="243.60" width="12.00" height="7.00" fill="#1212e6"/>
<ellipse cx="227.4" cy="244" rx="6" ry="1.3" fill="#2c2cff" stroke="#000080" stroke-width="0.4"/>
<line x1="221.40" y1="250.60" x2="233.40" y2="250.60" stroke="#000078" stroke-width="0.60"/>
<line x1="221.40" y1="244.00" x2="221.40" y2="250.60" stroke="#000078" stroke-width="0.40"/>
<line x1="233.40" y1="244.00" x2="233.40" y2="250.60" stroke="#000078" stroke-width="0.40"/>
<rect x="120.00" y="260.00" width="135.50" height="8.00" fill="#1010e8"/>
<ellipse cx="187.7" cy="260.4" rx="67.8" ry="2.1" fill="#2020fc" stroke="#00008a" stroke-width="0.4"/>
<line x1="120.00" y1="268.00" x2="255.50" y2="268.00" stroke="#000070" stroke-width="0.80"/>
<ellipse cx="185.8" cy="259.4" rx="9.4" ry="1.5" fill="#0606b0"/>
<rect x="178.50" y="250.00" width="14.50" height="9.00" fill="url(#blu)"/>
<rect x="140.50" y="268.30" width="93.30" height="17.70" fill="#0c0cd6"/>
<rect x="152.50" y="268.30" width="69.00" height="17.70" fill="url(#blu)"/>
<line x1="140.50" y1="268.30" x2="140.50" y2="286.00" stroke="#000068" stroke-width="0.60"/>
<line x1="233.80" y1="268.30" x2="233.80" y2="286.00" stroke="#000068" stroke-width="0.60"/>
<rect x="135.30" y="285.00" width="104.70" height="68.00" fill="url(#blu)"/>
<line x1="135.30" y1="285.00" x2="135.30" y2="353.00" stroke="#000068" stroke-width="0.70"/>
<line x1="240.00" y1="285.00" x2="240.00" y2="353.00" stroke="#000068" stroke-width="0.70"/>
<line x1="135.30" y1="285.20" x2="240.00" y2="285.20" stroke="#000080" stroke-width="0.70"/>
<rect x="135.60" y="285.60" width="5.40" height="67.40" fill="#0404b4"/>
<rect x="222.00" y="285.60" width="17.60" height="67.40" fill="#0808c4"/>
<rect x="230.00" y="285.60" width="3.40" height="67.40" fill="#1c1cf4"/>
<rect x="143.00" y="268.00" width="6.40" height="64.00" fill="#1010e0"/>
<line x1="143.00" y1="268.00" x2="143.00" y2="332.00" stroke="#000070" stroke-width="0.60"/>
<line x1="149.40" y1="268.00" x2="149.40" y2="332.00" stroke="#000070" stroke-width="0.60"/>
<rect x="224.20" y="268.00" width="6.40" height="64.00" fill="#1010e0"/>
<line x1="224.20" y1="268.00" x2="224.20" y2="332.00" stroke="#000070" stroke-width="0.60"/>
<line x1="230.60" y1="268.00" x2="230.60" y2="332.00" stroke="#000070" stroke-width="0.60"/>
<rect x="153.00" y="335.00" width="63.00" height="18.00" fill="#0a0acc"/>
<line x1="156.50" y1="335.50" x2="156.50" y2="353.00" stroke="#00008c" stroke-width="1.10"/>
<line x1="158.80" y1="335.50" x2="158.80" y2="353.00" stroke="#2e2eff" stroke-width="1.50"/>
<line x1="161.60" y1="335.50" x2="161.60" y2="353.00" stroke="#00008c" stroke-width="1.10"/>
<line x1="163.90" y1="335.50" x2="163.90" y2="353.00" stroke="#2e2eff" stroke-width="1.50"/>
<line x1="166.70" y1="335.50" x2="166.70" y2="353.00" stroke="#00008c" stroke-width="1.10"/>
<line x1="169.00" y1="335.50" x2="169.00" y2="353.00" stroke="#2e2eff" stroke-width="1.50"/>
<line x1="171.80" y1="335.50" x2="171.80" y2="353.00" stroke="#00008c" stroke-width="1.10"/>
<line x1="174.10" y1="335.50" x2="174.10" y2="353.00" stroke="#2e2eff" stroke-width="1.50"/>
<line x1="176.90" y1="335.50" x2="176.90" y2="353.00" stroke="#00008c" stroke-width="1.10"/>
<line x1="179.20" y1="335.50" x2="179.20" y2="353.00" stroke="#2e2eff" stroke-width="1.50"/>
<line x1="182.00" y1="335.50" x2="182.00" y2="353.00" stroke="#00008c" stroke-width="1.10"/>
<line x1="184.30" y1="335.50" x2="184.30" y2="353.00" stroke="#2e2eff" stroke-width="1.50"/>
<line x1="187.10" y1="335.50" x2="187.10" y2="353.00" stroke="#00008c" stroke-width="1.10"/>
<line x1="189.40" y1="335.50" x2="189.40" y2="353.00" stroke="#2e2eff" stroke-width="1.50"/>
<line x1="192.20" y1="335.50" x2="192.20" y2="353.00" stroke="#00008c" stroke-width="1.10"/>
<line x1="194.50" y1="335.50" x2="194.50" y2="353.00" stroke="#2e2eff" stroke-width="1.50"/>
<line x1="197.30" y1="335.50" x2="197.30" y2="353.00" stroke="#00008c" stroke-width="1.10"/>
<line x1="199.60" y1="335.50" x2="199.60" y2="353.00" stroke="#2e2eff" stroke-width="1.50"/>
<line x1="202.40" y1="335.50" x2="202.40" y2="353.00" stroke="#00008c" stroke-width="1.10"/>
<line x1="204.70" y1="335.50" x2="204.70" y2="353.00" stroke="#2e2eff" stroke-width="1.50"/>
<line x1="207.50" y1="335.50" x2="207.50" y2="353.00" stroke="#00008c" stroke-width="1.10"/>
<line x1="209.80" y1="335.50" x2="209.80" y2="353.00" stroke="#2e2eff" stroke-width="1.50"/>
<line x1="212.60" y1="335.50" x2="212.60" y2="353.00" stroke="#00008c" stroke-width="1.10"/>
<line x1="214.90" y1="335.50" x2="214.90" y2="353.00" stroke="#2e2eff" stroke-width="1.50"/>
<path d="M153,285.5 L214,284.5 Q216.5,285 216.5,288 L215.5,331 Q215,335 211,335 L156,335 Q152,335 151.8,331 L151,288.5 Q151,285.6 153,285.5 Z" fill="#2a2afc" stroke="#000068" stroke-width="0.7"/>
<path d="M201,291.5 L180,291.5 Q168.5,293.5 168.5,309 Q168.5,324 180,327.5 L201,328 Q204,328 204,325 L204,294.5 Q204,291.5 201,291.5 Z" fill="#2626f6" stroke="#000060" stroke-width="0.6"/>
<circle cx="187.2" cy="309.5" r="5" fill="#3030ff" stroke="#000060" stroke-width="0.6"/>
<text transform="translate(208.3,326) rotate(-90)" font-size="4.6" font-weight="bold" fill="#000060" textLength="32" lengthAdjust="spacingAndGlyphs">SIEMENS</text>
<rect x="148.60" y="297.00" width="2.00" height="4.50" fill="#00006a"/>
<rect x="148.60" y="306.00" width="2.00" height="4.50" fill="#00006a"/>
<rect x="148.60" y="315.00" width="2.00" height="4.50" fill="#00006a"/>
<rect x="148.60" y="324.00" width="2.00" height="4.50" fill="#00006a"/>
<rect x="319.40" y="252.00" width="263.20" height="101.00" fill="url(#gr)"/>
<rect x="319.40" y="252.00" width="263.20" height="101.00" fill="url(#drumsh)"/>
<circle cx="318.6" cy="258.95" r="2.5" fill="#6a9ce2"/>
<circle cx="319.6" cy="264.15" r="1.3" fill="#2b4468"/>
<circle cx="582.6" cy="258.95" r="2.4" fill="#0f3470"/>
<circle cx="318.6" cy="269.20" r="2.5" fill="#6a9ce2"/>
<circle cx="319.6" cy="274.40" r="1.3" fill="#2b4468"/>
<circle cx="582.6" cy="269.20" r="2.4" fill="#0f3470"/>
<circle cx="318.6" cy="279.45" r="2.5" fill="#6a9ce2"/>
<circle cx="319.6" cy="284.65" r="1.3" fill="#2b4468"/>
<circle cx="582.6" cy="279.45" r="2.4" fill="#0f3470"/>
<circle cx="318.6" cy="289.70" r="2.5" fill="#6a9ce2"/>
<circle cx="319.6" cy="294.90" r="1.3" fill="#2b4468"/>
<circle cx="582.6" cy="289.70" r="2.4" fill="#0f3470"/>
<circle cx="318.6" cy="299.95" r="2.5" fill="#6a9ce2"/>
<circle cx="319.6" cy="305.15" r="1.3" fill="#2b4468"/>
<circle cx="582.6" cy="299.95" r="2.4" fill="#0f3470"/>
<circle cx="318.6" cy="310.20" r="2.5" fill="#6a9ce2"/>
<circle cx="319.6" cy="315.40" r="1.3" fill="#2b4468"/>
<circle cx="582.6" cy="310.20" r="2.4" fill="#0f3470"/>
<circle cx="318.6" cy="320.45" r="2.5" fill="#6a9ce2"/>
<circle cx="319.6" cy="325.65" r="1.3" fill="#2b4468"/>
<circle cx="582.6" cy="320.45" r="2.4" fill="#0f3470"/>
<circle cx="318.6" cy="330.70" r="2.5" fill="#6a9ce2"/>
<circle cx="319.6" cy="335.90" r="1.3" fill="#2b4468"/>
<circle cx="582.6" cy="330.70" r="2.4" fill="#0f3470"/>
<circle cx="318.6" cy="340.95" r="2.5" fill="#6a9ce2"/>
<circle cx="319.6" cy="346.15" r="1.3" fill="#2b4468"/>
<circle cx="582.6" cy="340.95" r="2.4" fill="#0f3470"/>
<circle cx="318.6" cy="351.20" r="2.5" fill="#6a9ce2"/>
<circle cx="319.6" cy="356.40" r="1.3" fill="#2b4468"/>
<circle cx="582.6" cy="351.20" r="2.4" fill="#0f3470"/>
<polygon points="295.00,247.60 603.00,244.40 605.50,246.00 605.50,251.00 603.00,252.40 295.00,255.80" fill="url(#flg)"/>
<polygon points="295.00,247.60 603.00,244.40 605.50,246.00 605.50,251.00 603.00,252.40 295.00,255.80" fill="url(#flgsh)"/>
<polygon points="317.50,255.60 583.00,252.20 583.00,254.20 317.50,257.00" fill="#04183c"/>
</g>
<rect x="0.00" y="0.00" width="746.00" height="9.30" fill="#fff"/>
<text x="1.9" y="7.1" font-size="7.6" font-style="italic" fill="#111" textLength="6.9" lengthAdjust="spacingAndGlyphs">V</text>
<text x="7.9" y="7.2" font-size="7.2" font-style="italic" fill="#e9a23e" textLength="8.2" lengthAdjust="spacingAndGlyphs">S</text>
<text x="244.50" y="6.29" font-size="4.70" font-weight="bold" fill="#333" stroke="#333" stroke-width="0.12" textLength="218.50" lengthAdjust="spacingAndGlyphs">Hoist Assembly.SLDASM - Kisters 3DViewStation 2025.4.329 - DataCAD - NOT FOR RESALE - NOT FOR RESALE</text>
<line x1="698.50" y1="4.60" x2="703.00" y2="4.60" stroke="#555" stroke-width="0.50"/>
<rect x="716.50" y="2.80" width="3.40" height="3.40" fill="none" stroke="#444" stroke-width="0.5"/>
<line x1="716.90" y1="2.20" x2="720.60" y2="2.20" stroke="#444" stroke-width="0.40"/>
<line x1="720.60" y1="2.20" x2="720.60" y2="5.80" stroke="#444" stroke-width="0.40"/>
<line x1="734.00" y1="2.40" x2="738.40" y2="6.60" stroke="#444" stroke-width="0.50"/>
<line x1="738.40" y1="2.40" x2="734.00" y2="6.60" stroke="#444" stroke-width="0.50"/>
<rect x="0.00" y="9.20" width="746.00" height="8.60" fill="#df7d26"/>
<rect x="18.20" y="9.60" width="20.00" height="8.40" fill="#fff"/>
<path d="M8.3,12.6 l1.7,0 l-0.85,1.1 z" fill="#3a2a1a"/>
<text x="22.90" y="15.70" font-size="5.00" fill="#333" stroke="#333" stroke-width="0.12" textLength="10.60" lengthAdjust="spacingAndGlyphs">Start</text>
<text x="43.75" y="15.70" font-size="5.00" fill="#fdeedd" stroke="#fdeedd" stroke-width="0.12" textLength="14.50" lengthAdjust="spacingAndGlyphs">Ansicht</text>
<text x="67.75" y="15.70" font-size="5.00" fill="#fdeedd" stroke="#fdeedd" stroke-width="0.12" textLength="14.50" lengthAdjust="spacingAndGlyphs">Messen</text>
<text x="95.50" y="15.70" font-size="5.00" fill="#fdeedd" stroke="#fdeedd" stroke-width="0.12" textLength="29.00" lengthAdjust="spacingAndGlyphs">Transformieren</text>
<text x="136.25" y="15.70" font-size="5.00" fill="#fdeedd" stroke="#fdeedd" stroke-width="0.12" textLength="18.50" lengthAdjust="spacingAndGlyphs">Erzeugen</text>
<text x="167.25" y="15.70" font-size="5.00" fill="#fdeedd" stroke="#fdeedd" stroke-width="0.12" textLength="15.50" lengthAdjust="spacingAndGlyphs">Analyse</text>
<text x="193.75" y="15.70" font-size="5.00" fill="#fdeedd" stroke="#fdeedd" stroke-width="0.12" textLength="21.50" lengthAdjust="spacingAndGlyphs">Werkzeuge</text>
<text x="226.75" y="15.70" font-size="5.00" fill="#fdeedd" stroke="#fdeedd" stroke-width="0.12" textLength="12.50" lengthAdjust="spacingAndGlyphs">Extras</text>
<text x="249.50" y="15.70" font-size="5.00" fill="#fdeedd" stroke="#fdeedd" stroke-width="0.12" textLength="17.00" lengthAdjust="spacingAndGlyphs">TechDoc</text>
<text x="279.50" y="15.70" font-size="5.00" fill="#fdeedd" stroke="#fdeedd" stroke-width="0.12" textLength="5.00" lengthAdjust="spacingAndGlyphs">2D</text>
<text x="296.75" y="15.70" font-size="5.00" fill="#fdeedd" stroke="#fdeedd" stroke-width="0.12" textLength="9.50" lengthAdjust="spacingAndGlyphs">Hilfe</text>
<rect x="655.50" y="10.30" width="67.50" height="6.20" fill="#f3efe9" stroke="#c8b8a4" stroke-width="0.3"/>
<text x="656.50" y="14.96" font-size="4.60" fill="#222" stroke="#222" stroke-width="0.12" textLength="45.50" lengthAdjust="spacingAndGlyphs">Suche in Online-Hilfe...</text>
<circle cx="729.3" cy="13.4" r="3" fill="#5b86c4" stroke="#e9eef6" stroke-width="0.7"/>
<path d="M728,14.6 L730.6,12" stroke="#fff" stroke-width="0.8"/>
<path d="M733.6,13 l1.6,0 l-0.8,1 z" fill="#3a2a1a"/>
<circle cx="740.3" cy="13.4" r="3" fill="#d9d6d2" stroke="#f4f2ef" stroke-width="0.7"/>
<text x="739.20" y="15.16" font-size="4.60" font-weight="bold" fill="#555" stroke="#555" stroke-width="0.12" textLength="2.20" lengthAdjust="spacingAndGlyphs">?</text>
<rect x="0.00" y="17.80" width="746.00" height="34.40" fill="#fff"/>
<line x1="0.00" y1="52.20" x2="746.00" y2="52.20" stroke="#e4e4e4" stroke-width="0.50"/>
<rect x="234.00" y="19.00" width="19.20" height="25.20" fill="#cde3f6" stroke="#9cc3e6" stroke-width="0.4"/>
<rect x="390.30" y="19.00" width="20.50" height="25.20" fill="#cde3f6" stroke="#9cc3e6" stroke-width="0.4"/>
<path d="M6.20,20.00 h7.2 l3,3 v10 h-10.2 z" fill="#f3f3f3" stroke="#b4b4b4" stroke-width="0.5"/>
<path d="M13.40,20.00 v3 h3 z" fill="#d0d0d0" stroke="#b0b0b0" stroke-width="0.3"/>
<text x="7.50" y="38.63" font-size="4.80" fill="#3c3c3c" stroke="#3c3c3c" stroke-width="0.12" textLength="7.40" lengthAdjust="spacingAndGlyphs">Neu</text>
<path d="M21.30,22.40 h4 l1.2,1.3 h6.8 v9.5 h-12.4 z" fill="#e79a72" stroke="#cf7e54" stroke-width="0.4"/>
<path d="M23.10,26.20 h11.6 l-1.4,7 h-11.8 z" fill="#f08a5e" stroke="#d8703e" stroke-width="0.3"/>
<path d="M31.40,20.90 l2,0 l0,2 z" fill="#555"/>
<text x="20.60" y="38.63" font-size="4.80" fill="#3c3c3c" stroke="#3c3c3c" stroke-width="0.12" textLength="13.60" lengthAdjust="spacingAndGlyphs">Öffnen</text>
<path d="M43.40,20.00 h7.2 l3,3 v10 h-10.2 z" fill="#f3f3f3" stroke="#b4b4b4" stroke-width="0.5"/>
<path d="M50.60,20.00 v3 h3 z" fill="#d0d0d0" stroke="#b0b0b0" stroke-width="0.3"/>
<path d="M42.2,27.8 h3 v-1.8 l3,2.9 l-3,2.9 v-1.8 h-3 z" fill="#d9661e"/>
<circle cx="44.4" cy="28.9" r="2.4" fill="#d9661e" opacity="0.75"/>
<text x="37.00" y="38.63" font-size="4.80" fill="#3c3c3c" stroke="#3c3c3c" stroke-width="0.12" textLength="22.60" lengthAdjust="spacingAndGlyphs">Importieren</text>
<path d="M47.4,41.6 l1.8,0 l-0.9,1.1 z" fill="#333"/>
<rect x="65.40" y="20.60" width="12.00" height="12.00" fill="#5492c8" rx="0.8" stroke="#3f7db4" stroke-width="0.4"/>
<rect x="68.00" y="20.90" width="6.80" height="4.20" fill="#a3c4e2"/>
<rect x="67.80" y="27.80" width="7.20" height="4.50" fill="#e6eef6"/>
<rect x="72.80" y="21.40" width="1.40" height="3.20" fill="#5a8fc0"/>
<text x="61.90" y="38.63" font-size="4.80" fill="#3c3c3c" stroke="#3c3c3c" stroke-width="0.12" textLength="19.60" lengthAdjust="spacingAndGlyphs">Speichern</text>
<rect x="86.50" y="20.60" width="12.00" height="12.00" fill="#5492c8" rx="0.8" stroke="#3f7db4" stroke-width="0.4"/>
<rect x="89.10" y="20.90" width="6.80" height="4.20" fill="#a3c4e2"/>
<rect x="88.90" y="27.80" width="7.20" height="4.50" fill="#e6eef6"/>
<rect x="93.90" y="21.40" width="1.40" height="3.20" fill="#5a8fc0"/>
<path d="M89.70,29.80 l6.5,-7.2 l2,1.6 l-6.6,7.2 l-2.6,1 z" fill="#e2874a" stroke="#8a4a1e" stroke-width="0.3"/>
<text x="83.00" y="38.63" font-size="4.80" fill="#3c3c3c" stroke="#3c3c3c" stroke-width="0.12" textLength="20.00" lengthAdjust="spacingAndGlyphs">Speichern</text>
<text x="88.00" y="43.63" font-size="4.80" fill="#3c3c3c" stroke="#3c3c3c" stroke-width="0.12" textLength="10.20" lengthAdjust="spacingAndGlyphs">unter</text>
<rect x="114.50" y="21.60" width="10.00" height="11.60" fill="#e59a72" rx="0.7" stroke="#b86a44" stroke-width="0.4"/>
<rect x="117.30" y="20.00" width="4.60" height="2.60" fill="#8c9fb3" rx="0.6"/>
<rect x="119.30" y="25.00" width="7.60" height="8.60" fill="#f5f5f5" stroke="#9a9a9a" stroke-width="0.4"/>
<rect x="120.90" y="27.20" width="4.40" height="3.60" fill="#c8705a" stroke="#7a3a2a" stroke-width="0.3"/>
<text x="105.00" y="38.63" font-size="4.80" fill="#3c3c3c" stroke="#3c3c3c" stroke-width="0.12" textLength="32.40" lengthAdjust="spacingAndGlyphs">Zwischenablage</text>
<rect x="142.60" y="20.00" width="7.60" height="5.00" fill="#f5f7fa" stroke="#a8b4c2" stroke-width="0.4"/>
<rect x="140.00" y="24.40" width="12.80" height="6.60" fill="#4f93c8" rx="0.9" stroke="#2f6da0" stroke-width="0.4"/>
<rect x="140.00" y="26.00" width="12.80" height="1.60" fill="#9cc4e4"/>
<rect x="142.40" y="28.80" width="8.00" height="4.60" fill="#f7f9fb" stroke="#a8b4c2" stroke-width="0.4"/>
<text x="138.40" y="38.63" font-size="4.80" fill="#3c3c3c" stroke="#3c3c3c" stroke-width="0.12" textLength="16.00" lengthAdjust="spacingAndGlyphs">Drucken</text>
<line x1="157.30" y1="20.00" x2="157.30" y2="46.00" stroke="#e2e2e2" stroke-width="0.50"/>
<path d="M171.00,22.80 a4.3,4.3 0 1 1 -3.2,7.4" fill="none" stroke="#e0702a" stroke-width="2.6"/>
<path d="M172.00,20.60 l-4.6,0.8 l3.4,3.6 z" fill="#e0702a"/>
<text x="165.40" y="38.63" font-size="4.80" fill="#3c3c3c" stroke="#3c3c3c" stroke-width="0.12" textLength="12.00" lengthAdjust="spacingAndGlyphs">Letzte</text>
<line x1="183.60" y1="20.00" x2="183.60" y2="46.00" stroke="#e2e2e2" stroke-width="0.50"/>
<rect x="197.20" y="20.20" width="9.60" height="9.60" fill="#fbfbfb" stroke="#a9a9a9" stroke-width="0.5" stroke-dasharray="1,0.6"/>
<circle cx="206.6" cy="29.6" r="1.9" fill="#eef4fa" stroke="#8a96a4" stroke-width="0.7"/>
<line x1="208.00" y1="31.00" x2="209.80" y2="33.00" stroke="#6a7480" stroke-width="0.90"/>
<text x="191.00" y="38.63" font-size="4.80" fill="#3c3c3c" stroke="#3c3c3c" stroke-width="0.12" textLength="25.20" lengthAdjust="spacingAndGlyphs">Zoomrahmen</text>
<circle cx="223.40" cy="25.20" r="4.1" fill="#d6e6f6" stroke="#7c8896" stroke-width="1.3"/>
<line x1="226.40" y1="28.40" x2="230.20" y2="32.40" stroke="#5a6470" stroke-width="1.80"/>
<circle cx="223.4" cy="25.2" r="2.2" fill="none" stroke="#e0702a" stroke-width="1.1"/>
<text x="220.20" y="38.63" font-size="4.80" fill="#3c3c3c" stroke="#3c3c3c" stroke-width="0.12" textLength="10.40" lengthAdjust="spacingAndGlyphs">Zoom</text>
<path d="M243.60,19.70 l2.7,3.2 h-1.5 v2 h2 v-1.5 l3.2,2.7 l-3.2,2.7 v-1.5 h-2 v2 h1.5 l-2.7,3.2 l-2.7,-3.2 h1.5 v-2 h-2 v1.5 l-3.2,-2.7 l3.2,-2.7 v1.5 h2 v-2 h-1.5 z" fill="#ef8552" stroke="#d2602c" stroke-width="0.3"/>
<text x="234.90" y="38.63" font-size="4.80" fill="#333" stroke="#333" stroke-width="0.12" textLength="18.40" lengthAdjust="spacingAndGlyphs">Schieben</text>
<path d="M261.00,22.70 a4.3,4.3 0 1 1 -3.2,7.4" fill="none" stroke="#e56f24" stroke-width="2.6"/>
<path d="M262.00,20.50 l-4.6,0.8 l3.4,3.6 z" fill="#e56f24"/>
<text x="255.15" y="38.63" font-size="4.80" fill="#3c3c3c" stroke="#3c3c3c" stroke-width="0.12" textLength="13.70" lengthAdjust="spacingAndGlyphs">Drehen</text>
<ellipse cx="283" cy="29.4" rx="6" ry="2.7" fill="#f4f4f4" stroke="#8a8a8a" stroke-width="0.5"/>
<ellipse cx="283" cy="26.2" rx="5.2" ry="2.3" fill="#fbfbfb" stroke="#9a9a9a" stroke-width="0.5"/>
<path d="M278.4,22.6 h5 v-1.4 l2.6,2.2 l-2.6,2.2 v-1.4 h-5 z" fill="#e0702a"/>
<path d="M279,31.6 a6,2.6 0 0 0 8,0" fill="none" stroke="#e0702a" stroke-width="1"/>
<text x="271.30" y="38.63" font-size="4.80" fill="#3c3c3c" stroke="#3c3c3c" stroke-width="0.12" textLength="23.40" lengthAdjust="spacingAndGlyphs">Drehscheibe</text>
<rect x="311.20" y="20.60" width="9.60" height="9.60" fill="#fbfbfb" stroke="#a9a9a9" stroke-width="0.5" stroke-dasharray="1,0.6"/>
<path d="M318.6,28 l0,5.2 l1.3,-1.2 l1,2.2 l0.9,-0.4 l-1,-2.2 l1.7,-0.1 z" fill="#666"/>
<text x="298.30" y="38.63" font-size="4.80" fill="#3c3c3c" stroke="#3c3c3c" stroke-width="0.12" textLength="35.40" lengthAdjust="spacingAndGlyphs">Selektionsrahmen</text>
<line x1="336.60" y1="20.00" x2="336.60" y2="46.00" stroke="#e2e2e2" stroke-width="0.50"/>
<circle cx="346.40" cy="24.80" r="4.1" fill="#d6e6f6" stroke="#8a9cb2" stroke-width="1.3"/>
<line x1="349.40" y1="28.00" x2="353.20" y2="32.00" stroke="#5a6470" stroke-width="1.80"/>
<text x="340.80" y="38.63" font-size="4.80" fill="#3c3c3c" stroke="#3c3c3c" stroke-width="0.12" textLength="12.00" lengthAdjust="spacingAndGlyphs">Suche</text>
<rect x="364.30" y="21.30" width="3.40" height="3.40" fill="#5a98d8" stroke="#fff" stroke-width="0.4"/>
<rect x="364.30" y="25.50" width="3.40" height="3.40" fill="#5a98d8" stroke="#fff" stroke-width="0.4"/>
<rect x="368.50" y="22.30" width="3.40" height="3.40" fill="#e8855a" stroke="#fff" stroke-width="0.4"/>
<rect x="372.50" y="22.30" width="3.40" height="3.40" fill="#e8855a" stroke="#fff" stroke-width="0.4"/>
<rect x="368.50" y="26.50" width="3.40" height="3.40" fill="#e8855a" stroke="#fff" stroke-width="0.4"/>
<rect x="372.50" y="26.50" width="3.40" height="3.40" fill="#ecc2ae" stroke="#fff" stroke-width="0.4"/>
<path d="M373.6,27.4 l0,5.4 l1.3,-1.2 l1.1,2.3 l0.9,-0.4 l-1.1,-2.3 l1.8,-0.1 z" fill="#fff" stroke="#666" stroke-width="0.4"/>
<text x="356.10" y="38.63" font-size="4.80" fill="#3c3c3c" stroke="#3c3c3c" stroke-width="0.12" textLength="29.00" lengthAdjust="spacingAndGlyphs">Nachbarschaft</text>
<line x1="387.60" y1="20.00" x2="387.60" y2="46.00" stroke="#e2e2e2" stroke-width="0.50"/>
<rect x="395.10" y="22.60" width="3.80" height="3.80" fill="#5a98d8" stroke="#eef4fa" stroke-width="0.35"/>
<polygon points="395.10,22.60 396.20,21.50 400.00,21.50 398.90,22.60" fill="#a5c9ec"/>
<polygon points="398.90,22.60 400.00,21.50 400.00,25.30 398.90,26.40" fill="#3c78b8"/>
<rect x="399.30" y="22.60" width="3.80" height="3.80" fill="#e8855a" stroke="#eef4fa" stroke-width="0.35"/>
<polygon points="399.30,22.60 400.40,21.50 404.20,21.50 403.10,22.60" fill="#f3b79c"/>
<polygon points="403.10,22.60 404.20,21.50 404.20,25.30 403.10,26.40" fill="#c0623a"/>
<rect x="395.10" y="27.00" width="3.80" height="3.80" fill="#5a98d8" stroke="#eef4fa" stroke-width="0.35"/>
<polygon points="395.10,27.00 396.20,25.90 400.00,25.90 398.90,27.00" fill="#a5c9ec"/>
<polygon points="398.90,27.00 400.00,25.90 400.00,29.70 398.90,30.80" fill="#3c78b8"/>
<rect x="399.30" y="27.00" width="3.80" height="3.80" fill="#5a98d8" stroke="#eef4fa" stroke-width="0.35"/>
<polygon points="399.30,27.00 400.40,25.90 404.20,25.90 403.10,27.00" fill="#a5c9ec"/>
<polygon points="403.10,27.00 404.20,25.90 404.20,29.70 403.10,30.80" fill="#3c78b8"/>
<path d="M401.6,26.8 l0,6 l1.5,-1.4 l1.2,2.6 l1,-0.5 l-1.2,-2.5 l2,-0.1 z" fill="#fff" stroke="#555" stroke-width="0.4"/>
<text x="391.50" y="38.63" font-size="4.80" fill="#333" stroke="#333" stroke-width="0.12" textLength="16.60" lengthAdjust="spacingAndGlyphs">Standard</text>
<path d="M414,23 a5.6,5.6 0 1 1 -0.4,7.4" fill="none" stroke="#e27a48" stroke-width="2.2"/>
<circle cx="418.8" cy="26.6" r="5.2" fill="#f4c4aa" opacity="0.75"/>
<circle cx="416.2" cy="26.6" r="2.2" fill="#fbeee6" stroke="#c86030" stroke-width="0.4"/><circle cx="421.6" cy="29" r="2.5" fill="#fbf3ee" stroke="#b0a8a2" stroke-width="0.5"/><circle cx="421.6" cy="29" r="0.9" fill="#d8c8c0"/>
<text x="410.95" y="38.63" font-size="4.80" fill="#3c3c3c" stroke="#3c3c3c" stroke-width="0.12" textLength="13.90" lengthAdjust="spacingAndGlyphs">Instanz</text>
<path d="M417.7,41.6 l1.8,0 l-0.9,1.1 z" fill="#333"/>
<line x1="430.40" y1="20.00" x2="430.40" y2="46.00" stroke="#e2e2e2" stroke-width="0.50"/>
<rect x="435.10" y="22.40" width="3.80" height="3.80" fill="#5a98d8" stroke="#eef4fa" stroke-width="0.35"/>
<polygon points="435.10,22.40 436.20,21.30 440.00,21.30 438.90,22.40" fill="#a5c9ec"/>
<polygon points="438.90,22.40 440.00,21.30 440.00,25.10 438.90,26.20" fill="#3c78b8"/>
<rect x="439.30" y="22.40" width="3.80" height="3.80" fill="#5a98d8" stroke="#eef4fa" stroke-width="0.35"/>
<polygon points="439.30,22.40 440.40,21.30 444.20,21.30 443.10,22.40" fill="#a5c9ec"/>
<polygon points="443.10,22.40 444.20,21.30 444.20,25.10 443.10,26.20" fill="#3c78b8"/>
<rect x="435.10" y="26.80" width="3.80" height="3.80" fill="#5a98d8" stroke="#eef4fa" stroke-width="0.35"/>
<polygon points="435.10,26.80 436.20,25.70 440.00,25.70 438.90,26.80" fill="#a5c9ec"/>
<polygon points="438.90,26.80 440.00,25.70 440.00,29.50 438.90,30.60" fill="#3c78b8"/>
<rect x="439.30" y="26.80" width="3.80" height="3.80" fill="#5a98d8" stroke="#eef4fa" stroke-width="0.35"/>
<polygon points="439.30,26.80 440.40,25.70 444.20,25.70 443.10,26.80" fill="#a5c9ec"/>
<polygon points="443.10,26.80 444.20,25.70 444.20,29.50 443.10,30.60" fill="#3c78b8"/>
<text x="430.75" y="38.63" font-size="4.80" fill="#3c3c3c" stroke="#3c3c3c" stroke-width="0.12" textLength="19.30" lengthAdjust="spacingAndGlyphs">Aufheben</text>
<rect x="457.90" y="22.40" width="3.80" height="3.80" fill="#e8855a" stroke="#eef4fa" stroke-width="0.35"/>
<polygon points="457.90,22.40 459.00,21.30 462.80,21.30 461.70,22.40" fill="#f3b79c"/>
<polygon points="461.70,22.40 462.80,21.30 462.80,25.10 461.70,26.20" fill="#c0623a"/>
<rect x="462.10" y="22.40" width="3.80" height="3.80" fill="#e8855a" stroke="#eef4fa" stroke-width="0.35"/>
<polygon points="462.10,22.40 463.20,21.30 467.00,21.30 465.90,22.40" fill="#f3b79c"/>
<polygon points="465.90,22.40 467.00,21.30 467.00,25.10 465.90,26.20" fill="#c0623a"/>
<rect x="457.90" y="26.80" width="3.80" height="3.80" fill="#e8855a" stroke="#eef4fa" stroke-width="0.35"/>
<polygon points="457.90,26.80 459.00,25.70 462.80,25.70 461.70,26.80" fill="#f3b79c"/>
<polygon points="461.70,26.80 462.80,25.70 462.80,29.50 461.70,30.60" fill="#c0623a"/>
<rect x="462.10" y="26.80" width="3.80" height="3.80" fill="#e8855a" stroke="#eef4fa" stroke-width="0.35"/>
<polygon points="462.10,26.80 463.20,25.70 467.00,25.70 465.90,26.80" fill="#f3b79c"/>
<polygon points="465.90,26.80 467.00,25.70 467.00,29.50 465.90,30.60" fill="#c0623a"/>
<text x="458.60" y="38.63" font-size="4.80" fill="#3c3c3c" stroke="#3c3c3c" stroke-width="0.12" textLength="8.40" lengthAdjust="spacingAndGlyphs">Alles</text>
<text x="452.00" y="43.63" font-size="4.80" fill="#3c3c3c" stroke="#3c3c3c" stroke-width="0.12" textLength="18.60" lengthAdjust="spacingAndGlyphs">Sichtbare</text>
<path d="M471.4,41.6 l1.8,0 l-0.9,1.1 z" fill="#333"/>
<line x1="476.60" y1="20.00" x2="476.60" y2="46.00" stroke="#e2e2e2" stroke-width="0.50"/>
<rect x="486.10" y="22.40" width="3.80" height="3.80" fill="#68a4de" stroke="#eef4fa" stroke-width="0.35"/>
<polygon points="486.10,22.40 487.20,21.30 491.00,21.30 489.90,22.40" fill="#b4d4f0"/>
<polygon points="489.90,22.40 491.00,21.30 491.00,25.10 489.90,26.20" fill="#4a84c4"/>
<rect x="490.30" y="22.40" width="3.80" height="3.80" fill="#68a4de" stroke="#eef4fa" stroke-width="0.35"/>
<polygon points="490.30,22.40 491.40,21.30 495.20,21.30 494.10,22.40" fill="#b4d4f0"/>
<polygon points="494.10,22.40 495.20,21.30 495.20,25.10 494.10,26.20" fill="#4a84c4"/>
<rect x="486.10" y="26.80" width="3.80" height="3.80" fill="#68a4de" stroke="#eef4fa" stroke-width="0.35"/>
<polygon points="486.10,26.80 487.20,25.70 491.00,25.70 489.90,26.80" fill="#b4d4f0"/>
<polygon points="489.90,26.80 491.00,25.70 491.00,29.50 489.90,30.60" fill="#4a84c4"/>
<rect x="490.30" y="26.80" width="3.80" height="3.80" fill="#68a4de" stroke="#eef4fa" stroke-width="0.35"/>
<polygon points="490.30,26.80 491.40,25.70 495.20,25.70 494.10,26.80" fill="#b4d4f0"/>
<polygon points="494.10,26.80 495.20,25.70 495.20,29.50 494.10,30.60" fill="#4a84c4"/>
<text x="480.60" y="38.63" font-size="4.80" fill="#3c3c3c" stroke="#3c3c3c" stroke-width="0.12" textLength="19.60" lengthAdjust="spacingAndGlyphs">Verbergen</text>
<path d="M489.6,41.6 l1.8,0 l-0.9,1.1 z" fill="#333"/>
<line x1="506.40" y1="20.00" x2="506.40" y2="46.00" stroke="#e2e2e2" stroke-width="0.50"/>
<rect x="514.90" y="22.20" width="3.80" height="3.80" fill="#5a98d8" stroke="#eef4fa" stroke-width="0.35"/>
<polygon points="514.90,22.20 516.00,21.10 519.80,21.10 518.70,22.20" fill="#a5c9ec"/>
<polygon points="518.70,22.20 519.80,21.10 519.80,24.90 518.70,26.00" fill="#3c78b8"/>
<rect x="519.10" y="22.20" width="3.80" height="3.80" fill="#5a98d8" stroke="#eef4fa" stroke-width="0.35"/>
<polygon points="519.10,22.20 520.20,21.10 524.00,21.10 522.90,22.20" fill="#a5c9ec"/>
<polygon points="522.90,22.20 524.00,21.10 524.00,24.90 522.90,26.00" fill="#3c78b8"/>
<rect x="514.90" y="26.60" width="3.80" height="3.80" fill="#5a98d8" stroke="#eef4fa" stroke-width="0.35"/>
<polygon points="514.90,26.60 516.00,25.50 519.80,25.50 518.70,26.60" fill="#a5c9ec"/>
<polygon points="518.70,26.60 519.80,25.50 519.80,29.30 518.70,30.40" fill="#3c78b8"/>
<rect x="519.10" y="26.60" width="3.80" height="3.80" fill="#5a98d8" stroke="#eef4fa" stroke-width="0.35"/>
<polygon points="519.10,26.60 520.20,25.50 524.00,25.50 522.90,26.60" fill="#a5c9ec"/>
<polygon points="522.90,26.60 524.00,25.50 524.00,29.30 522.90,30.40" fill="#3c78b8"/>
<path d="M521,28.6 l3,0 l-1.5,3 z" fill="#e0702a"/>
<text x="515.20" y="38.63" font-size="4.80" fill="#3c3c3c" stroke="#3c3c3c" stroke-width="0.12" textLength="8.60" lengthAdjust="spacingAndGlyphs">Alles</text>
<text x="510.90" y="43.83" font-size="4.80" fill="#3c3c3c" stroke="#3c3c3c" stroke-width="0.12" textLength="17.60" lengthAdjust="spacingAndGlyphs">anzeigen</text>
<rect x="530.90" y="21.50" width="4.40" height="4.40" fill="#f4ece8" stroke="#d8644a" stroke-width="0.5"/>
<rect x="531.90" y="22.60" width="2.40" height="2.40" fill="#d8644a"/>
<text x="538.50" y="25.56" font-size="4.90" fill="#3c3c3c" stroke="#3c3c3c" stroke-width="0.12" textLength="33.70" lengthAdjust="spacingAndGlyphs">Alles entgliedern</text>
<rect x="530.90" y="29.90" width="4.40" height="4.40" fill="#f4ece8" stroke="#7e9a7a" stroke-width="0.5"/>
<rect x="531.90" y="31.00" width="2.40" height="2.40" fill="#7e9a7a"/>
<text x="538.50" y="33.96" font-size="4.90" fill="#3c3c3c" stroke="#3c3c3c" stroke-width="0.12" textLength="38.50" lengthAdjust="spacingAndGlyphs">Markups verbergen</text>
<rect x="530.90" y="38.30" width="4.40" height="4.40" fill="#f4ece8" stroke="#9a8a8a" stroke-width="0.5"/>
<rect x="531.90" y="39.40" width="2.40" height="2.40" fill="#9a8a8a"/>
<text x="538.50" y="42.36" font-size="4.90" fill="#3c3c3c" stroke="#3c3c3c" stroke-width="0.12" textLength="31.00" lengthAdjust="spacingAndGlyphs">PMIs verbergen</text>
<rect x="579.80" y="21.50" width="4.40" height="4.40" fill="#f4ece8" stroke="#d8644a" stroke-width="0.5"/>
<rect x="580.80" y="22.60" width="2.40" height="2.40" fill="#d8644a"/>
<text x="587.40" y="25.56" font-size="4.90" fill="#3c3c3c" stroke="#3c3c3c" stroke-width="0.12" textLength="45.00" lengthAdjust="spacingAndGlyphs">Sichtbarkeit umkehren</text>
<line x1="635.00" y1="19.00" x2="635.00" y2="51.00" stroke="#ececec" stroke-width="0.50"/>
<text x="73.60" y="49.89" font-size="4.70" fill="#222" stroke="#222" stroke-width="0.12" textLength="9.60" lengthAdjust="spacingAndGlyphs">Datei</text>
<text x="251.35" y="49.89" font-size="4.70" fill="#222" stroke="#222" stroke-width="0.12" textLength="20.50" lengthAdjust="spacingAndGlyphs">Bedienung</text>
<text x="340.75" y="49.89" font-size="4.70" fill="#222" stroke="#222" stroke-width="0.12" textLength="43.70" lengthAdjust="spacingAndGlyphs">Suchen &amp; Selektieren</text>
<text x="392.25" y="49.89" font-size="4.70" fill="#222" stroke="#222" stroke-width="0.12" textLength="31.50" lengthAdjust="spacingAndGlyphs">Selektionsmodus</text>
<text x="438.20" y="49.89" font-size="4.70" fill="#222" stroke="#222" stroke-width="0.12" textLength="21.60" lengthAdjust="spacingAndGlyphs">Selektieren</text>
<text x="478.60" y="49.89" font-size="4.70" fill="#222" stroke="#222" stroke-width="0.12" textLength="25.60" lengthAdjust="spacingAndGlyphs">Auf Selektion</text>
<text x="559.90" y="49.89" font-size="4.70" fill="#222" stroke="#222" stroke-width="0.12" textLength="23.00" lengthAdjust="spacingAndGlyphs">Sichtbarkeit</text>
<rect x="104.60" y="37.60" width="127.00" height="13.60" fill="#fff" stroke="#b9b9b9" stroke-width="0.5"/>
<rect x="105.60" y="51.20" width="127.00" height="0.90" fill="#d9d9d9"/>
<rect x="231.60" y="38.60" width="0.90" height="13.40" fill="#dcdcdc"/>
<text x="107.60" y="43.03" font-size="4.80" fill="#6a6a6a" stroke="#6a6a6a" stroke-width="0.12" textLength="43.20" lengthAdjust="spacingAndGlyphs">Datei: Zwischenablage</text>
<text x="108.40" y="49.03" font-size="4.80" fill="#6a6a6a" stroke="#6a6a6a" stroke-width="0.12" textLength="118.00" lengthAdjust="spacingAndGlyphs">Erzeugt einen Screenshot der Szene in der Zwischenablage.</text>
<rect x="0.00" y="52.40" width="746.00" height="10.60" fill="#fff"/>
<rect x="18.40" y="54.60" width="6.80" height="7.60" fill="#dfe6ee" stroke="#aab6c4" stroke-width="0.4"/>
<rect x="45.60" y="54.60" width="7.60" height="7.60" fill="#dfe6ee" stroke="#aab6c4" stroke-width="0.4"/>
<rect x="3.20" y="55.60" width="4.60" height="4.80" fill="#fbfbfb" stroke="#a6a6a6" stroke-width="0.4"/>
<line x1="6.60" y1="59.40" x2="8.40" y2="61.40" stroke="#777" stroke-width="0.80"/>
<path d="M11.6,56.6 a2.4,2.4 0 1 1 -1.2,4.3" fill="none" stroke="#e0702a" stroke-width="1.5"/>
<path d="M21.8,55.4 l1.6,1.8 h-1 v0.8 h0.9 v-0.9 l1.8,1.5 l-1.8,1.5 v-0.9 h-0.9 v0.8 h1 l-1.6,1.8 l-1.6,-1.8 h1 v-0.8 h-0.9 v0.9 l-1.8,-1.5 l1.8,-1.5 v0.9 h0.9 v-0.8 h-1 z" fill="#ea8050"/>
<rect x="28.20" y="55.60" width="4.60" height="4.80" fill="#fbfbfb" stroke="#a6a6a6" stroke-width="0.4"/>
<line x1="31.60" y1="59.40" x2="33.40" y2="61.40" stroke="#777" stroke-width="0.80"/>
<circle cx="38.2" cy="57.6" r="2.1" fill="#eef4fa" stroke="#8894a2" stroke-width="0.8"/>
<line x1="39.80" y1="59.20" x2="41.60" y2="61.20" stroke="#6a7480" stroke-width="1.00"/>
<rect x="47.20" y="56.20" width="4.40" height="4.40" fill="#a9c4e0" stroke="#5a86b4" stroke-width="0.4"/>
<line x1="49.80" y1="58.60" x2="51.40" y2="60.80" stroke="#444" stroke-width="0.70"/>
<rect x="56.20" y="56.00" width="4.40" height="4.60" fill="#e8936c" stroke="#c26a40" stroke-width="0.3"/>
<rect x="57.60" y="57.20" width="2.60" height="2.40" fill="#f6ddd0"/>
<path d="M63.6,57.8 l1.7,0 l-0.85,1 z" fill="#333"/>
<rect x="69.20" y="56.00" width="4.20" height="4.40" fill="#5b92cc" stroke="#3a6ea6" stroke-width="0.3"/>
<rect x="70.60" y="57.60" width="2.60" height="2.60" fill="#dbe8f4"/>
<rect x="79.60" y="56.40" width="4.80" height="3.60" fill="#fbfbfb" stroke="#8a8a8a" stroke-width="0.4"/>
<line x1="83.60" y1="55.40" x2="85.20" y2="56.60" stroke="#777" stroke-width="0.60"/>
<circle cx="90.6" cy="58.4" r="2.3" fill="#fbfbfb" stroke="#8a8a8a" stroke-width="0.5"/>
<line x1="90.60" y1="56.00" x2="92.40" y2="55.60" stroke="#777" stroke-width="0.60"/>
<rect x="96.20" y="56.20" width="5.40" height="4.40" fill="#f7eee6" rx="0.8" stroke="#8a8078" stroke-width="0.5"/>
<circle cx="107.6" cy="58.8" r="2.4" fill="#fbfbfb" stroke="#7a7a7a" stroke-width="0.5"/>
<line x1="107.60" y1="58.80" x2="108.80" y2="57.60" stroke="#666" stroke-width="0.50"/>
<path d="M116.2,57.8 l1.7,0 l-0.85,1 z" fill="#333"/>
<rect x="0.00" y="63.00" width="117.00" height="340.00" fill="#f0f0f0"/>
<rect x="0.00" y="63.80" width="116.20" height="6.40" fill="#df7d26"/>
<text x="1.80" y="68.80" font-size="5.00" fill="#fbe6cf" stroke="#fbe6cf" stroke-width="0.12" textLength="28.20" lengthAdjust="spacingAndGlyphs">Eigenschaften</text>
<rect x="104.60" y="65.40" width="2.20" height="2.40" fill="none" stroke="#fbe6cf" stroke-width="0.4"/>
<line x1="105.70" y1="67.80" x2="105.70" y2="69.00" stroke="#fbe6cf" stroke-width="0.40"/>
<rect x="110.60" y="64.60" width="5.00" height="5.20" fill="#e2603a"/>
<line x1="112.30" y1="66.40" x2="113.90" y2="68.00" stroke="#fff" stroke-width="0.50"/>
<line x1="113.90" y1="66.40" x2="112.30" y2="68.00" stroke="#fff" stroke-width="0.50"/>
<rect x="0.80" y="70.60" width="115.20" height="291.80" fill="#fff" stroke="#d0d0d0" stroke-width="0.4"/>
<rect x="3.40" y="74.60" width="5.60" height="5.20" fill="#eef5fb" stroke="#9ec3df" stroke-width="0.6"/>
<line x1="4.60" y1="77.20" x2="7.80" y2="77.20" stroke="#5a94c8" stroke-width="0.70"/>
<line x1="6.20" y1="75.60" x2="6.20" y2="78.80" stroke="#5a94c8" stroke-width="0.70"/>
<rect x="13.00" y="74.60" width="5.60" height="5.20" fill="#eef5fb" stroke="#9ec3df" stroke-width="0.6"/>
<line x1="14.20" y1="77.20" x2="17.40" y2="77.20" stroke="#5a94c8" stroke-width="0.70"/>
<rect x="22.30" y="74.60" width="5.60" height="5.20" fill="#eef5fb" stroke="#9ec3df" stroke-width="0.6"/>
<rect x="23.90" y="76.00" width="2.60" height="2.60" fill="#8fb8da"/>
<rect x="31.60" y="74.60" width="5.60" height="5.20" fill="#eef5fb" stroke="#9ec3df" stroke-width="0.6"/>
<rect x="33.20" y="76.00" width="2.60" height="2.60" fill="#8fb8da"/>
<rect x="41.00" y="74.60" width="5.60" height="5.20" fill="#eef5fb" stroke="#9ec3df" stroke-width="0.6"/>
<rect x="42.60" y="76.00" width="2.60" height="2.60" fill="#8fb8da"/>
<rect x="1.00" y="81.30" width="108.00" height="7.40" fill="#f0f0f0"/>
<rect x="3.40" y="83.50" width="3.00" height="3.00" fill="#fff" stroke="#9a9a9a" stroke-width="0.4"/>
<line x1="4.10" y1="85.00" x2="5.70" y2="85.00" stroke="#666" stroke-width="0.40"/>
<text x="10.00" y="86.84" font-size="5.10" font-weight="bold" fill="#1c1c1c" stroke="#1c1c1c" stroke-width="0.12" textLength="45.63" lengthAdjust="spacingAndGlyphs">Knoteneigenschaften</text>
<rect x="1.00" y="88.70" width="108.00" height="7.40" fill="#f0f0f0"/>
<rect x="10.60" y="90.90" width="3.00" height="3.00" fill="#fff" stroke="#9a9a9a" stroke-width="0.4"/>
<line x1="11.30" y1="92.40" x2="12.90" y2="92.40" stroke="#666" stroke-width="0.40"/>
<text x="17.80" y="94.24" font-size="5.10" font-weight="bold" fill="#1c1c1c" stroke="#1c1c1c" stroke-width="0.12" textLength="21.45" lengthAdjust="spacingAndGlyphs">Allgemein</text>
<rect x="1.00" y="96.10" width="15.40" height="7.40" fill="#f0f0f0"/>
<line x1="16.40" y1="103.51" x2="109.00" y2="103.51" stroke="#f0f0f0" stroke-width="0.50"/>
<text x="17.60" y="101.64" font-size="5.10" fill="#333" stroke="#333" stroke-width="0.12" textLength="12.11" lengthAdjust="spacingAndGlyphs">Name</text>
<text x="60.20" y="101.64" font-size="5.10" fill="#333" stroke="#333" stroke-width="0.12" textLength="17.66" lengthAdjust="spacingAndGlyphs">shaft 1-1</text>
<rect x="1.00" y="103.51" width="15.40" height="7.40" fill="#f0f0f0"/>
<line x1="16.40" y1="110.91" x2="109.00" y2="110.91" stroke="#f0f0f0" stroke-width="0.50"/>
<text x="17.60" y="109.05" font-size="5.10" fill="#333" stroke="#333" stroke-width="0.12" textLength="7.32" lengthAdjust="spacingAndGlyphs">Typ</text>
<text x="60.20" y="109.05" font-size="5.10" fill="#333" stroke="#333" stroke-width="0.12" textLength="39.10" lengthAdjust="spacingAndGlyphs">ProductOccurrence</text>
<rect x="1.00" y="110.91" width="15.40" height="7.40" fill="#f0f0f0"/>
<line x1="16.40" y1="118.31" x2="109.00" y2="118.31" stroke="#f0f0f0" stroke-width="0.50"/>
<text x="17.60" y="116.45" font-size="5.10" fill="#333" stroke="#333" stroke-width="0.12" textLength="31.03" lengthAdjust="spacingAndGlyphs">ID des Knotens</text>
<text x="60.20" y="116.45" font-size="5.10" fill="#333" stroke="#333" stroke-width="0.12" textLength="5.05" lengthAdjust="spacingAndGlyphs">68</text>
<rect x="1.00" y="118.31" width="15.40" height="7.40" fill="#f0f0f0"/>
<line x1="16.40" y1="125.72" x2="109.00" y2="125.72" stroke="#f0f0f0" stroke-width="0.50"/>
<text x="17.60" y="123.85" font-size="5.10" fill="#333" stroke="#333" stroke-width="0.12" textLength="38.30" lengthAdjust="spacingAndGlyphs">Benutzerdefiniert...</text>
<rect x="1.00" y="125.72" width="15.40" height="7.40" fill="#f0f0f0"/>
<line x1="16.40" y1="133.12" x2="109.00" y2="133.12" stroke="#f0f0f0" stroke-width="0.50"/>
<text x="17.60" y="131.25" font-size="5.10" fill="#333" stroke="#333" stroke-width="0.12" textLength="34.81" lengthAdjust="spacingAndGlyphs">ID der Geometrie</text>
<text x="60.20" y="131.25" font-size="5.10" fill="#333" stroke="#333" stroke-width="0.12" textLength="2.52" lengthAdjust="spacingAndGlyphs">0</text>
<rect x="1.00" y="133.12" width="15.40" height="7.40" fill="#f0f0f0"/>
<line x1="16.40" y1="140.52" x2="109.00" y2="140.52" stroke="#f0f0f0" stroke-width="0.50"/>
<text x="17.60" y="138.66" font-size="5.10" fill="#333" stroke="#333" stroke-width="0.12" textLength="19.43" lengthAdjust="spacingAndGlyphs">Dateipfad</text>
<text x="60.20" y="138.66" font-size="5.10" fill="#333" stroke="#333" stroke-width="0.12" textLength="44.64" lengthAdjust="spacingAndGlyphs">\\vsmuk\F\Claudia\C...</text>
<rect x="1.00" y="140.52" width="15.40" height="7.40" fill="#f0f0f0"/>
<line x1="16.40" y1="147.93" x2="109.00" y2="147.93" stroke="#f0f0f0" stroke-width="0.50"/>
<text x="17.60" y="146.06" font-size="5.10" fill="#333" stroke="#333" stroke-width="0.12" textLength="35.00" lengthAdjust="spacingAndGlyphs">Enthält Geometri...</text>
<text x="60.20" y="146.06" font-size="5.10" fill="#333" stroke="#333" stroke-width="0.12" textLength="4.79" lengthAdjust="spacingAndGlyphs">Ja</text>
<rect x="1.00" y="147.93" width="15.40" height="7.40" fill="#f0f0f0"/>
<line x1="16.40" y1="155.33" x2="109.00" y2="155.33" stroke="#f0f0f0" stroke-width="0.50"/>
<text x="17.60" y="153.46" font-size="5.10" fill="#333" stroke="#333" stroke-width="0.12" textLength="16.14" lengthAdjust="spacingAndGlyphs">Material</text>
<text x="60.20" y="153.46" font-size="5.10" fill="#333" stroke="#333" stroke-width="0.12" textLength="11.35" lengthAdjust="spacingAndGlyphs">Keins</text>
<rect x="102.60" y="148.53" width="5.60" height="6.20" fill="#f2f2f2" stroke="#c4c4c4" stroke-width="0.3"/>
<path d="M104.20,151.13 l1.2,1.2 l1.2,-1.2" fill="none" stroke="#555" stroke-width="0.5"/>
<rect x="1.00" y="155.33" width="15.40" height="7.40" fill="#f0f0f0"/>
<line x1="16.40" y1="162.73" x2="109.00" y2="162.73" stroke="#f0f0f0" stroke-width="0.50"/>
<text x="17.60" y="160.87" font-size="5.10" fill="#333" stroke="#333" stroke-width="0.12" textLength="12.36" lengthAdjust="spacingAndGlyphs">Textur</text>
<text x="60.20" y="160.87" font-size="5.10" fill="#333" stroke="#333" stroke-width="0.12" textLength="11.61" lengthAdjust="spacingAndGlyphs">Keine</text>
<rect x="102.60" y="155.93" width="5.60" height="6.20" fill="#f2f2f2" stroke="#c4c4c4" stroke-width="0.3"/>
<path d="M104.20,158.53 l1.2,1.2 l1.2,-1.2" fill="none" stroke="#555" stroke-width="0.5"/>
<rect x="1.00" y="162.73" width="15.40" height="7.40" fill="#f0f0f0"/>
<line x1="16.40" y1="170.13" x2="109.00" y2="170.13" stroke="#f0f0f0" stroke-width="0.50"/>
<text x="17.60" y="168.27" font-size="5.10" fill="#333" stroke="#333" stroke-width="0.12" textLength="37.00" lengthAdjust="spacingAndGlyphs">Farbe überschrei...</text>
<text x="60.20" y="168.27" font-size="5.10" fill="#333" stroke="#333" stroke-width="0.12" textLength="14.39" lengthAdjust="spacingAndGlyphs">Knoten</text>
<rect x="102.60" y="163.33" width="5.60" height="6.20" fill="#f2f2f2" stroke="#c4c4c4" stroke-width="0.3"/>
<path d="M104.20,165.93 l1.2,1.2 l1.2,-1.2" fill="none" stroke="#555" stroke-width="0.5"/>
<rect x="1.00" y="170.13" width="15.40" height="7.40" fill="#f0f0f0"/>
<line x1="16.40" y1="177.54" x2="109.00" y2="177.54" stroke="#f0f0f0" stroke-width="0.50"/>
<text x="17.60" y="175.67" font-size="5.10" fill="#333" stroke="#333" stroke-width="0.12" textLength="11.86" lengthAdjust="spacingAndGlyphs">Farbe</text>
<rect x="60.40" y="171.44" width="5.40" height="4.80" fill="#7f7f7f" stroke="#555" stroke-width="0.3"/>
<text x="68.40" y="175.67" font-size="5.10" fill="#3a3a3a" stroke="#3a3a3a" stroke-width="0.12" textLength="40.20" lengthAdjust="spacingAndGlyphs">(127, 127, 127), (#7F</text>
<rect x="1.00" y="177.54" width="15.40" height="7.40" fill="#f0f0f0"/>
<line x1="16.40" y1="184.94" x2="109.00" y2="184.94" stroke="#f0f0f0" stroke-width="0.50"/>
<text x="17.60" y="183.07" font-size="5.10" fill="#333" stroke="#333" stroke-width="0.12" textLength="36.00" lengthAdjust="spacingAndGlyphs">Transparenz übers...</text>
<text x="60.20" y="183.07" font-size="5.10" fill="#333" stroke="#333" stroke-width="0.12" textLength="14.39" lengthAdjust="spacingAndGlyphs">Knoten</text>
<rect x="102.60" y="178.14" width="5.60" height="6.20" fill="#f2f2f2" stroke="#c4c4c4" stroke-width="0.3"/>
<path d="M104.20,180.74 l1.2,1.2 l1.2,-1.2" fill="none" stroke="#555" stroke-width="0.5"/>
<rect x="1.00" y="184.94" width="15.40" height="7.40" fill="#f0f0f0"/>
<line x1="16.40" y1="192.34" x2="109.00" y2="192.34" stroke="#f0f0f0" stroke-width="0.50"/>
<text x="17.60" y="190.48" font-size="5.10" fill="#333" stroke="#333" stroke-width="0.12" textLength="25.31" lengthAdjust="spacingAndGlyphs">Transparenz</text>
<text x="60.20" y="190.48" font-size="5.10" fill="#333" stroke="#333" stroke-width="0.12" textLength="7.82" lengthAdjust="spacingAndGlyphs">0 %</text>
<line x1="76.00" y1="188.64" x2="107.00" y2="188.64" stroke="#d8d8d8" stroke-width="0.80"/>
<rect x="75.60" y="186.44" width="2.20" height="4.40" fill="#1c6fd0" rx="0.5"/>
<rect x="1.00" y="192.34" width="15.40" height="7.40" fill="#f0f0f0"/>
<line x1="16.40" y1="199.75" x2="109.00" y2="199.75" stroke="#f0f0f0" stroke-width="0.50"/>
<text x="17.60" y="197.88" font-size="5.10" fill="#333" stroke="#333" stroke-width="0.12" textLength="22.45" lengthAdjust="spacingAndGlyphs">Leuchtkraft</text>
<text x="60.20" y="197.88" font-size="5.10" fill="#333" stroke="#333" stroke-width="0.12" textLength="7.82" lengthAdjust="spacingAndGlyphs">0 %</text>
<line x1="76.00" y1="196.04" x2="107.00" y2="196.04" stroke="#d8d8d8" stroke-width="0.80"/>
<rect x="75.60" y="193.84" width="2.20" height="4.40" fill="#1c6fd0" rx="0.5"/>
<rect x="1.00" y="199.75" width="108.00" height="7.40" fill="#f0f0f0"/>
<rect x="18.20" y="201.95" width="3.00" height="3.00" fill="#fff" stroke="#9a9a9a" stroke-width="0.4"/>
<line x1="18.90" y1="203.45" x2="20.50" y2="203.45" stroke="#666" stroke-width="0.40"/>
<text x="25.00" y="205.28" font-size="5.10" font-weight="bold" fill="#1c1c1c" stroke="#1c1c1c" stroke-width="0.12" textLength="16.96" lengthAdjust="spacingAndGlyphs">Material</text>
<rect x="1.00" y="207.15" width="23.00" height="7.40" fill="#f0f0f0"/>
<line x1="16.40" y1="214.55" x2="109.00" y2="214.55" stroke="#f0f0f0" stroke-width="0.50"/>
<text x="25.20" y="212.69" font-size="5.10" fill="#333" stroke="#333" stroke-width="0.12" textLength="21.45" lengthAdjust="spacingAndGlyphs">Skalierung</text>
<text x="60.20" y="212.69" font-size="5.10" fill="#333" stroke="#333" stroke-width="0.12" textLength="19.18" lengthAdjust="spacingAndGlyphs">100.00 %</text>
<rect x="1.00" y="214.55" width="23.00" height="7.40" fill="#f0f0f0"/>
<line x1="16.40" y1="221.96" x2="109.00" y2="221.96" stroke="#f0f0f0" stroke-width="0.50"/>
<text x="25.20" y="220.09" font-size="5.10" fill="#333" stroke="#333" stroke-width="0.12" textLength="16.90" lengthAdjust="spacingAndGlyphs">Rotation</text>
<text x="60.20" y="220.09" font-size="5.10" fill="#333" stroke="#333" stroke-width="0.12" textLength="10.65" lengthAdjust="spacingAndGlyphs">0.00°</text>
<rect x="1.00" y="221.96" width="108.00" height="7.40" fill="#f0f0f0"/>
<rect x="18.20" y="224.16" width="3.00" height="3.00" fill="#fff" stroke="#9a9a9a" stroke-width="0.4"/>
<line x1="18.90" y1="225.66" x2="20.50" y2="225.66" stroke="#666" stroke-width="0.40"/>
<text x="25.00" y="227.49" font-size="5.10" font-weight="bold" fill="#1c1c1c" stroke="#1c1c1c" stroke-width="0.12" textLength="69.05" lengthAdjust="spacingAndGlyphs">Bounding-Box Zentrum Position</text>
<rect x="1.00" y="229.36" width="23.00" height="7.40" fill="#f0f0f0"/>
<line x1="16.40" y1="236.76" x2="109.00" y2="236.76" stroke="#f0f0f0" stroke-width="0.50"/>
<text x="25.20" y="234.90" font-size="5.10" fill="#333" stroke="#333" stroke-width="0.12" textLength="3.03" lengthAdjust="spacingAndGlyphs">X</text>
<text x="60.20" y="234.90" font-size="5.10" fill="#333" stroke="#333" stroke-width="0.12" textLength="21.69" lengthAdjust="spacingAndGlyphs">-10.99 mm</text>
<rect x="1.00" y="236.76" width="23.00" height="7.40" fill="#f0f0f0"/>
<line x1="16.40" y1="244.16" x2="109.00" y2="244.16" stroke="#f0f0f0" stroke-width="0.50"/>
<text x="25.20" y="242.30" font-size="5.10" fill="#333" stroke="#333" stroke-width="0.12" textLength="3.03" lengthAdjust="spacingAndGlyphs">Y</text>
<text x="60.20" y="242.30" font-size="5.10" fill="#333" stroke="#333" stroke-width="0.12" textLength="17.66" lengthAdjust="spacingAndGlyphs">0.00 mm</text>
<rect x="1.00" y="244.16" width="23.00" height="7.40" fill="#f0f0f0"/>
<line x1="16.40" y1="251.57" x2="109.00" y2="251.57" stroke="#f0f0f0" stroke-width="0.50"/>
<text x="25.20" y="249.70" font-size="5.10" fill="#333" stroke="#333" stroke-width="0.12" textLength="2.77" lengthAdjust="spacingAndGlyphs">Z</text>
<text x="60.20" y="249.70" font-size="5.10" fill="#333" stroke="#333" stroke-width="0.12" textLength="24.22" lengthAdjust="spacingAndGlyphs">-745.91 mm</text>
<rect x="1.00" y="251.57" width="108.00" height="7.40" fill="#f0f0f0"/>
<rect x="18.20" y="253.77" width="3.00" height="3.00" fill="#fff" stroke="#9a9a9a" stroke-width="0.4"/>
<line x1="18.90" y1="255.27" x2="20.50" y2="255.27" stroke="#666" stroke-width="0.40"/>
<text x="25.00" y="257.10" font-size="5.10" font-weight="bold" fill="#1c1c1c" stroke="#1c1c1c" stroke-width="0.12" textLength="52.19" lengthAdjust="spacingAndGlyphs">Bounding-Box Ausmaße</text>
<rect x="1.00" y="258.97" width="23.00" height="7.40" fill="#f0f0f0"/>
<line x1="16.40" y1="266.37" x2="109.00" y2="266.37" stroke="#f0f0f0" stroke-width="0.50"/>
<text x="25.20" y="264.51" font-size="5.10" fill="#333" stroke="#333" stroke-width="0.12" textLength="6.31" lengthAdjust="spacingAndGlyphs">DX</text>
<text x="60.20" y="264.51" font-size="5.10" fill="#333" stroke="#333" stroke-width="0.12" textLength="20.18" lengthAdjust="spacingAndGlyphs">38.10 mm</text>
<rect x="1.00" y="266.37" width="23.00" height="7.40" fill="#f0f0f0"/>
<line x1="16.40" y1="273.78" x2="109.00" y2="273.78" stroke="#f0f0f0" stroke-width="0.50"/>
<text x="25.20" y="271.91" font-size="5.10" fill="#333" stroke="#333" stroke-width="0.12" textLength="6.31" lengthAdjust="spacingAndGlyphs">DY</text>
<text x="60.20" y="271.91" font-size="5.10" fill="#333" stroke="#333" stroke-width="0.12" textLength="20.18" lengthAdjust="spacingAndGlyphs">38.10 mm</text>
<rect x="1.00" y="273.78" width="23.00" height="7.40" fill="#f0f0f0"/>
<line x1="16.40" y1="281.18" x2="109.00" y2="281.18" stroke="#f0f0f0" stroke-width="0.50"/>
<text x="25.20" y="279.31" font-size="5.10" fill="#333" stroke="#333" stroke-width="0.12" textLength="6.05" lengthAdjust="spacingAndGlyphs">DZ</text>
<text x="60.20" y="279.31" font-size="5.10" fill="#333" stroke="#333" stroke-width="0.12" textLength="22.70" lengthAdjust="spacingAndGlyphs">184.06 mm</text>
<rect x="1.00" y="281.18" width="15.40" height="7.40" fill="#f0f0f0"/>
<line x1="16.40" y1="288.58" x2="109.00" y2="288.58" stroke="#f0f0f0" stroke-width="0.50"/>
<text x="17.60" y="286.72" font-size="5.10" fill="#333" stroke="#333" stroke-width="0.12" textLength="31.03" lengthAdjust="spacingAndGlyphs">Dreiecksanzahl</text>
<text x="60.20" y="286.72" font-size="5.10" fill="#333" stroke="#333" stroke-width="0.12" textLength="10.10" lengthAdjust="spacingAndGlyphs">2956</text>
<rect x="1.00" y="288.58" width="108.00" height="7.40" fill="#f0f0f0"/>
<rect x="10.60" y="290.78" width="3.00" height="3.00" fill="#fff" stroke="#9a9a9a" stroke-width="0.4"/>
<line x1="11.30" y1="292.28" x2="12.90" y2="292.28" stroke="#666" stroke-width="0.40"/>
<text x="17.80" y="294.12" font-size="5.10" font-weight="bold" fill="#1c1c1c" stroke="#1c1c1c" stroke-width="0.12" textLength="61.61" lengthAdjust="spacingAndGlyphs">Physikalische Eigenschaften</text>
<rect x="1.00" y="295.99" width="15.40" height="7.40" fill="#f0f0f0"/>
<line x1="16.40" y1="303.39" x2="109.00" y2="303.39" stroke="#f0f0f0" stroke-width="0.50"/>
<text x="17.60" y="301.52" font-size="5.10" fill="#333" stroke="#333" stroke-width="0.12" textLength="22.20" lengthAdjust="spacingAndGlyphs">Oberfläche</text>
<text x="60.20" y="301.52" font-size="5.10" fill="#333" stroke="#333" stroke-width="0.12" textLength="29.26" lengthAdjust="spacingAndGlyphs">17766.81 mm²</text>
<rect x="1.00" y="303.39" width="15.40" height="7.40" fill="#f0f0f0"/>
<line x1="16.40" y1="310.79" x2="109.00" y2="310.79" stroke="#f0f0f0" stroke-width="0.50"/>
<text x="17.60" y="308.93" font-size="5.10" fill="#333" stroke="#333" stroke-width="0.12" textLength="17.66" lengthAdjust="spacingAndGlyphs">Volumen</text>
<text x="60.20" y="308.93" font-size="5.10" fill="#333" stroke="#333" stroke-width="0.12" textLength="31.45" lengthAdjust="spacingAndGlyphs">115387.06 mm³</text>
<rect x="1.00" y="310.79" width="15.40" height="7.40" fill="#f0f0f0"/>
<line x1="16.40" y1="318.19" x2="109.00" y2="318.19" stroke="#f0f0f0" stroke-width="0.50"/>
<text x="17.60" y="316.33" font-size="5.10" fill="#333" stroke="#333" stroke-width="0.12" textLength="12.87" lengthAdjust="spacingAndGlyphs">Dichte</text>
<text x="60.20" y="316.33" font-size="5.10" fill="#333" stroke="#333" stroke-width="0.12" textLength="7.57" lengthAdjust="spacingAndGlyphs">N/A</text>
<rect x="1.00" y="318.19" width="15.40" height="7.40" fill="#f0f0f0"/>
<line x1="16.40" y1="325.60" x2="109.00" y2="325.60" stroke="#f0f0f0" stroke-width="0.50"/>
<text x="17.60" y="323.73" font-size="5.10" fill="#333" stroke="#333" stroke-width="0.12" textLength="13.37" lengthAdjust="spacingAndGlyphs">Masse</text>
<text x="60.20" y="323.73" font-size="5.10" fill="#333" stroke="#333" stroke-width="0.12" textLength="7.57" lengthAdjust="spacingAndGlyphs">N/A</text>
<rect x="1.00" y="325.60" width="108.00" height="7.40" fill="#f0f0f0"/>
<rect x="18.20" y="327.80" width="3.00" height="3.00" fill="#fff" stroke="#9a9a9a" stroke-width="0.4"/>
<line x1="18.90" y1="329.30" x2="20.50" y2="329.30" stroke="#666" stroke-width="0.40"/>
<text x="25.00" y="331.13" font-size="5.10" font-weight="bold" fill="#1c1c1c" stroke="#1c1c1c" stroke-width="0.12" textLength="28.18" lengthAdjust="spacingAndGlyphs">Schwerpunkt</text>
<rect x="1.00" y="333.00" width="23.00" height="7.40" fill="#f0f0f0"/>
<line x1="16.40" y1="340.40" x2="109.00" y2="340.40" stroke="#f0f0f0" stroke-width="0.50"/>
<rect x="56.60" y="333.30" width="52.00" height="6.80" fill="#d9ebf9"/>
<text x="60.00" y="338.47" font-size="4.90" fill="#333" stroke="#333" stroke-width="0.12" textLength="47.00" lengthAdjust="spacingAndGlyphs">Schwerpunkt anzeigen</text>
<rect x="1.00" y="340.40" width="108.00" height="7.40" fill="#f0f0f0"/>
<rect x="24.40" y="342.60" width="3.00" height="3.00" fill="#fff" stroke="#9a9a9a" stroke-width="0.4"/>
<line x1="25.10" y1="344.10" x2="26.70" y2="344.10" stroke="#666" stroke-width="0.40"/>
<text x="32.00" y="345.94" font-size="5.10" font-weight="bold" fill="#1c1c1c" stroke="#1c1c1c" stroke-width="0.12" textLength="35.07" lengthAdjust="spacingAndGlyphs">Weltkoordinaten</text>
<rect x="1.00" y="347.81" width="30.00" height="7.40" fill="#f0f0f0"/>
<line x1="16.40" y1="355.21" x2="109.00" y2="355.21" stroke="#f0f0f0" stroke-width="0.50"/>
<text x="32.20" y="353.34" font-size="5.10" fill="#333" stroke="#333" stroke-width="0.12" textLength="3.03" lengthAdjust="spacingAndGlyphs">X</text>
<text x="60.20" y="353.34" font-size="5.10" fill="#333" stroke="#333" stroke-width="0.12" textLength="21.69" lengthAdjust="spacingAndGlyphs">-10.99 mm</text>
<rect x="1.00" y="355.21" width="30.00" height="7.40" fill="#f0f0f0"/>
<line x1="16.40" y1="362.61" x2="109.00" y2="362.61" stroke="#f0f0f0" stroke-width="0.50"/>
<text x="32.20" y="360.75" font-size="5.10" fill="#333" stroke="#333" stroke-width="0.12" textLength="3.03" lengthAdjust="spacingAndGlyphs">Y</text>
<text x="60.20" y="360.75" font-size="5.10" fill="#333" stroke="#333" stroke-width="0.12" textLength="17.66" lengthAdjust="spacingAndGlyphs">0.00 mm</text>
<rect x="109.20" y="81.40" width="6.40" height="280.80" fill="#f0f0f0"/>
<rect x="109.90" y="88.70" width="4.80" height="94.60" fill="#cdcdcd"/>
<path d="M110.9,85.8 l1.4,-1.4 l1.4,1.4" fill="none" stroke="#555" stroke-width="0.6"/>
<path d="M111,357.6 l1.4,1.4 l1.4,-1.4" fill="none" stroke="#555" stroke-width="0.6"/>
<rect x="0.80" y="363.60" width="114.60" height="22.20" fill="#f0f0f0" stroke="#bdbdbd" stroke-width="0.5"/>
<text x="3.00" y="370.00" font-size="5.00" font-weight="bold" fill="#222" stroke="#222" stroke-width="0.12" textLength="46.40" lengthAdjust="spacingAndGlyphs">Szeneneigenschaften</text>
<rect x="0.00" y="386.40" width="117.00" height="18.00" fill="#fff"/>
<rect x="0.80" y="387.50" width="38.10" height="8.40" fill="#df7d26"/>
<rect x="2.00" y="389.60" width="3.60" height="4.00" fill="#f7d9bd" stroke="#fff" stroke-width="0.3"/>
<text x="9.20" y="393.80" font-size="5.00" fill="#fff" stroke="#fff" stroke-width="0.12" textLength="28.00" lengthAdjust="spacingAndGlyphs">Eigenschaften</text>
<circle cx="43.4" cy="392" r="2" fill="none" stroke="#2a2a2a" stroke-width="1.1"/>
<line x1="41.60" y1="390.20" x2="45.20" y2="393.80" stroke="#2a2a2a" stroke-width="0.60"/>
<line x1="45.20" y1="390.20" x2="41.60" y2="393.80" stroke="#2a2a2a" stroke-width="0.60"/>
<text x="48.00" y="393.80" font-size="5.00" fill="#222" stroke="#222" stroke-width="0.12" textLength="26.90" lengthAdjust="spacingAndGlyphs">Einstellungen</text>
<line x1="77.40" y1="388.40" x2="77.40" y2="395.60" stroke="#bbb" stroke-width="0.40"/>
<line x1="114.40" y1="388.40" x2="114.40" y2="395.60" stroke="#ccc" stroke-width="0.40"/>
<path d="M80.4,394 l2.4,-3 l1.2,0.8" fill="none" stroke="#666" stroke-width="0.6"/><circle cx="84.4" cy="390.4" r="1" fill="none" stroke="#666" stroke-width="0.5"/>
<text x="85.80" y="393.80" font-size="5.00" fill="#222" stroke="#222" stroke-width="0.12" textLength="25.10" lengthAdjust="spacingAndGlyphs">Lizenzierung</text>
<rect x="630.40" y="63.00" width="116.00" height="340.00" fill="#fff"/>
<rect x="632.40" y="63.90" width="113.60" height="6.30" fill="#df7d26"/>
<text x="634.60" y="68.80" font-size="5.00" fill="#fbe6cf" stroke="#fbe6cf" stroke-width="0.12" textLength="15.60" lengthAdjust="spacingAndGlyphs">Struktur</text>
<rect x="734.00" y="65.40" width="2.20" height="2.40" fill="none" stroke="#fbe6cf" stroke-width="0.4"/>
<line x1="735.10" y1="67.80" x2="735.10" y2="69.00" stroke="#fbe6cf" stroke-width="0.40"/>
<rect x="739.40" y="64.60" width="5.00" height="5.20" fill="#e2603a"/>
<line x1="741.10" y1="66.40" x2="742.70" y2="68.00" stroke="#fff" stroke-width="0.50"/>
<line x1="742.70" y1="66.40" x2="741.10" y2="68.00" stroke="#fff" stroke-width="0.50"/>
<rect x="632.80" y="70.40" width="113.20" height="327.00" fill="#fff"/>
<line x1="632.60" y1="70.40" x2="632.60" y2="397.20" stroke="#c4c4c4" stroke-width="0.50"/>
<line x1="632.60" y1="397.20" x2="746.00" y2="397.20" stroke="#c9c9c9" stroke-width="0.50"/>
<rect x="635.10" y="73.40" width="5.00" height="5.00" fill="#f2f7fc" stroke="#96bcdc" stroke-width="0.55"/>
<line x1="636.20" y1="75.90" x2="639.00" y2="75.90" stroke="#3f7fb6" stroke-width="0.60"/>
<line x1="637.60" y1="74.50" x2="637.60" y2="77.30" stroke="#3f7fb6" stroke-width="0.60"/>
<rect x="644.50" y="73.40" width="5.00" height="5.00" fill="#f2f7fc" stroke="#96bcdc" stroke-width="0.55"/>
<line x1="645.60" y1="75.90" x2="648.40" y2="75.90" stroke="#3f7fb6" stroke-width="0.60"/>
<rect x="654.10" y="73.40" width="5.00" height="5.00" fill="#f2f7fc" stroke="#96bcdc" stroke-width="0.55"/>
<line x1="655.20" y1="75.90" x2="658.00" y2="75.90" stroke="#3f7fb6" stroke-width="0.60"/>
<line x1="656.60" y1="74.50" x2="656.60" y2="77.30" stroke="#3f7fb6" stroke-width="0.60"/>
<rect x="662.90" y="73.40" width="5.00" height="5.00" fill="#f2f7fc" stroke="#96bcdc" stroke-width="0.55"/>
<line x1="664.00" y1="75.90" x2="666.80" y2="75.90" stroke="#3f7fb6" stroke-width="0.60"/>
<rect x="672.20" y="73.40" width="5.00" height="5.00" fill="#f2f7fc" stroke="#96bcdc" stroke-width="0.55"/>
<line x1="674.70" y1="73.60" x2="674.70" y2="78.20" stroke="#7fa9cc" stroke-width="0.50"/>
<line x1="672.30" y1="75.90" x2="677.10" y2="75.90" stroke="#7fa9cc" stroke-width="0.50"/>
<rect x="681.50" y="73.40" width="5.00" height="5.00" fill="#f2f7fc" stroke="#96bcdc" stroke-width="0.55"/>
<line x1="684.00" y1="73.60" x2="684.00" y2="78.20" stroke="#7fa9cc" stroke-width="0.50"/>
<line x1="681.60" y1="75.90" x2="686.40" y2="75.90" stroke="#7fa9cc" stroke-width="0.50"/>
<rect x="691.10" y="73.40" width="5.00" height="5.00" fill="#f2f7fc" stroke="#96bcdc" stroke-width="0.55"/>
<rect x="692.40" y="74.60" width="2.60" height="2.60" fill="#7fa6c8"/>
<rect x="700.40" y="73.40" width="5.00" height="5.00" fill="#f2f7fc" stroke="#96bcdc" stroke-width="0.55"/>
<rect x="701.70" y="74.60" width="2.60" height="2.60" fill="#7fa6c8"/>
<line x1="633.00" y1="80.60" x2="746.00" y2="80.60" stroke="#d6d6d6" stroke-width="0.50"/>
<rect x="633.00" y="80.99" width="113.00" height="6.21" fill="#f0f0f0"/>
<rect x="633.00" y="93.42" width="113.00" height="6.21" fill="#f0f0f0"/>
<rect x="633.00" y="105.84" width="113.00" height="6.21" fill="#f0f0f0"/>
<rect x="633.00" y="118.26" width="113.00" height="6.21" fill="#f0f0f0"/>
<rect x="633.00" y="130.68" width="113.00" height="6.21" fill="#f0f0f0"/>
<rect x="633.00" y="143.10" width="113.00" height="6.21" fill="#f0f0f0"/>
<rect x="633.00" y="155.53" width="113.00" height="6.21" fill="#f0f0f0"/>
<rect x="633.00" y="167.95" width="113.00" height="6.21" fill="#f0f0f0"/>
<rect x="633.00" y="180.37" width="113.00" height="6.21" fill="#f0f0f0"/>
<rect x="633.00" y="192.79" width="113.00" height="6.21" fill="#f0f0f0"/>
<rect x="633.00" y="205.21" width="113.00" height="6.21" fill="#f0f0f0"/>
<rect x="633.00" y="217.64" width="113.00" height="6.21" fill="#f0f0f0"/>
<rect x="633.00" y="230.06" width="113.00" height="6.21" fill="#f0f0f0"/>
<rect x="633.00" y="242.48" width="113.00" height="6.21" fill="#f0f0f0"/>
<rect x="633.00" y="254.90" width="113.00" height="6.21" fill="#f0f0f0"/>
<rect x="633.00" y="267.32" width="113.00" height="6.21" fill="#f0f0f0"/>
<rect x="633.00" y="279.75" width="113.00" height="6.21" fill="#f0f0f0"/>
<rect x="633.00" y="292.17" width="113.00" height="6.21" fill="#f0f0f0"/>
<rect x="633.00" y="304.59" width="113.00" height="6.21" fill="#f0f0f0"/>
<rect x="633.00" y="317.01" width="113.00" height="6.21" fill="#f0f0f0"/>
<rect x="633.00" y="329.43" width="113.00" height="6.21" fill="#f0f0f0"/>
<rect x="633.00" y="341.86" width="113.00" height="6.21" fill="#f0f0f0"/>
<rect x="633.00" y="354.28" width="113.00" height="6.21" fill="#f0f0f0"/>
<rect x="633.00" y="366.70" width="113.00" height="6.21" fill="#f0f0f0"/>
<rect x="633.00" y="379.12" width="113.00" height="6.21" fill="#f0f0f0"/>
<rect x="633.00" y="391.54" width="113.00" height="5.46" fill="#f0f0f0"/>
<line x1="647.20" y1="106.00" x2="647.20" y2="252.00" stroke="#9a9a9a" stroke-width="0.35" stroke-dasharray="0.5,0.7"/>
<path d="M634.60,85.50 l2.6,0 l0,-2.6 z" fill="#222"/>
<rect x="640.20" y="82.20" width="3.80" height="3.80" fill="#2f86d6"/>
<rect x="645.60" y="81.80" width="3.60" height="4.40" fill="#e8702a"/>
<rect x="646.80" y="83.10" width="1.40" height="1.40" fill="#fbe0cc"/>
<text x="651.70" y="85.94" font-size="5.10" fill="#2a2a2a" stroke="#2a2a2a" stroke-width="0.12" textLength="50.00" lengthAdjust="spacingAndGlyphs">Hoist Assembly.SLDASM</text>
<path d="M638.20,91.71 l2.6,0 l0,-2.6 z" fill="#222"/>
<path d="M635.80,88.11 v2.4 h1.6" fill="none" stroke="#777" stroke-width="0.35"/>
<rect x="643.70" y="88.41" width="3.80" height="3.80" fill="#2f86d6"/>
<path d="M650.70,89.21 l1.6,-1.2 v4.6 l-1.6,-1.2 h-1 v-2.2 z" fill="#666"/>
<line x1="652.90" y1="89.31" x2="652.90" y2="91.31" stroke="#888" stroke-width="0.40"/>
<text x="655.00" y="92.15" font-size="5.10" fill="#2a2a2a" stroke="#2a2a2a" stroke-width="0.12" textLength="31.80" lengthAdjust="spacingAndGlyphs">Hoist Assembly</text>
<path d="M640.80,97.92 l2.6,0 l0,-2.6 z" fill="#222"/>
<path d="M638.40,94.32 v2.4 h1.6" fill="none" stroke="#777" stroke-width="0.35"/>
<rect x="646.90" y="94.62" width="3.80" height="3.80" fill="#2f86d6"/>
<rect x="652.50" y="94.12" width="2.60" height="2.60" fill="#e0483a"/>
<rect x="653.70" y="96.12" width="2.60" height="2.60" fill="#5a8ed6"/>
<rect x="652.70" y="96.92" width="1.60" height="1.80" fill="#d86a5a"/>
<text x="658.20" y="98.36" font-size="5.10" fill="#2a2a2a" stroke="#2a2a2a" stroke-width="0.12" textLength="31.40" lengthAdjust="spacingAndGlyphs">Hoist Assembly</text>
<path d="M643.80,104.13 l2.6,0 l0,-2.6 z" fill="#222"/>
<path d="M641.40,100.53 v2.4 h1.6" fill="none" stroke="#777" stroke-width="0.35"/>
<rect x="649.80" y="100.83" width="3.80" height="3.80" fill="#2f86d6"/>
<rect x="655.40" y="100.33" width="2.60" height="2.60" fill="#e0483a"/>
<rect x="656.60" y="102.33" width="2.60" height="2.60" fill="#5a8ed6"/>
<rect x="655.60" y="103.13" width="1.60" height="1.80" fill="#d86a5a"/>
<text x="661.00" y="104.57" font-size="5.10" fill="#2a2a2a" stroke="#2a2a2a" stroke-width="0.12" textLength="15.00" lengthAdjust="spacingAndGlyphs">Default</text>
<path d="M647.40,107.44 l2.2,1.5 l-2.2,1.5 z" fill="#666" stroke="#222" stroke-width="0.45"/>
<rect x="652.50" y="107.04" width="3.80" height="3.80" fill="#2f86d6"/>
<rect x="658.20" y="106.54" width="2.60" height="2.60" fill="#e0483a"/>
<rect x="659.40" y="108.54" width="2.60" height="2.60" fill="#5a8ed6"/>
<rect x="658.40" y="109.34" width="1.60" height="1.80" fill="#d86a5a"/>
<text x="664.10" y="110.78" font-size="5.10" fill="#2a2a2a" stroke="#2a2a2a" stroke-width="0.12" textLength="18.00" lengthAdjust="spacingAndGlyphs">Shaft 2-1</text>
<path d="M647.40,113.66 l2.2,1.5 l-2.2,1.5 z" fill="#666" stroke="#222" stroke-width="0.45"/>
<rect x="652.50" y="113.25" width="3.80" height="3.80" fill="#2f86d6"/>
<rect x="658.20" y="112.75" width="2.60" height="2.60" fill="#e0483a"/>
<rect x="659.40" y="114.75" width="2.60" height="2.60" fill="#5a8ed6"/>
<rect x="658.40" y="115.56" width="1.60" height="1.80" fill="#d86a5a"/>
<text x="664.10" y="116.99" font-size="5.10" fill="#2a2a2a" stroke="#2a2a2a" stroke-width="0.12" textLength="18.00" lengthAdjust="spacingAndGlyphs">Shaft 3-1</text>
<path d="M647.40,119.87 l2.2,1.5 l-2.2,1.5 z" fill="#666" stroke="#222" stroke-width="0.45"/>
<rect x="652.50" y="119.47" width="3.80" height="3.80" fill="#2f86d6"/>
<rect x="658.20" y="118.97" width="2.60" height="2.60" fill="#e0483a"/>
<rect x="659.40" y="120.97" width="2.60" height="2.60" fill="#5a8ed6"/>
<rect x="658.40" y="121.77" width="1.60" height="1.80" fill="#d86a5a"/>
<text x="664.10" y="123.20" font-size="5.10" fill="#2a2a2a" stroke="#2a2a2a" stroke-width="0.12" textLength="37.20" lengthAdjust="spacingAndGlyphs">helical gear_3_ai-1</text>
<path d="M647.40,126.08 l2.2,1.5 l-2.2,1.5 z" fill="#666" stroke="#222" stroke-width="0.45"/>
<rect x="652.50" y="125.68" width="3.80" height="3.80" fill="#2f86d6"/>
<rect x="658.20" y="125.18" width="2.60" height="2.60" fill="#e0483a"/>
<rect x="659.40" y="127.18" width="2.60" height="2.60" fill="#5a8ed6"/>
<rect x="658.40" y="127.98" width="1.60" height="1.80" fill="#d86a5a"/>
<text x="664.10" y="129.41" font-size="5.10" fill="#2a2a2a" stroke="#2a2a2a" stroke-width="0.12" textLength="37.20" lengthAdjust="spacingAndGlyphs">helical gear_3_ai-2</text>
<path d="M647.40,132.29 l2.2,1.5 l-2.2,1.5 z" fill="#666" stroke="#222" stroke-width="0.45"/>
<rect x="652.50" y="131.89" width="3.80" height="3.80" fill="#2f86d6"/>
<rect x="658.20" y="131.39" width="2.60" height="2.60" fill="#e0483a"/>
<rect x="659.40" y="133.39" width="2.60" height="2.60" fill="#5a8ed6"/>
<rect x="658.40" y="134.19" width="1.60" height="1.80" fill="#d86a5a"/>
<text x="664.10" y="135.62" font-size="5.10" fill="#2a2a2a" stroke="#2a2a2a" stroke-width="0.12" textLength="37.20" lengthAdjust="spacingAndGlyphs">helical gear_3_ai-3</text>
<path d="M647.40,138.50 l2.2,1.5 l-2.2,1.5 z" fill="#666" stroke="#222" stroke-width="0.45"/>
<rect x="652.50" y="138.10" width="3.80" height="3.80" fill="#2f86d6"/>
<rect x="658.20" y="137.60" width="2.60" height="2.60" fill="#e0483a"/>
<rect x="659.40" y="139.60" width="2.60" height="2.60" fill="#5a8ed6"/>
<rect x="658.40" y="140.40" width="1.60" height="1.80" fill="#d86a5a"/>
<text x="664.10" y="141.84" font-size="5.10" fill="#2a2a2a" stroke="#2a2a2a" stroke-width="0.12" textLength="17.40" lengthAdjust="spacingAndGlyphs">shaft 4-1</text>
<path d="M647.40,144.71 l2.2,1.5 l-2.2,1.5 z" fill="#666" stroke="#222" stroke-width="0.45"/>
<rect x="652.50" y="144.31" width="3.80" height="3.80" fill="#2f86d6"/>
<rect x="658.20" y="143.81" width="2.60" height="2.60" fill="#e0483a"/>
<rect x="659.40" y="145.81" width="2.60" height="2.60" fill="#5a8ed6"/>
<rect x="658.40" y="146.61" width="1.60" height="1.80" fill="#d86a5a"/>
<text x="664.10" y="148.05" font-size="5.10" fill="#2a2a2a" stroke="#2a2a2a" stroke-width="0.12" textLength="37.20" lengthAdjust="spacingAndGlyphs">helical gear_3_ai-9</text>
<path d="M647.40,150.92 l2.2,1.5 l-2.2,1.5 z" fill="#666" stroke="#222" stroke-width="0.45"/>
<rect x="652.50" y="150.52" width="3.80" height="3.80" fill="#2f86d6"/>
<rect x="658.20" y="150.02" width="2.60" height="2.60" fill="#e0483a"/>
<rect x="659.40" y="152.02" width="2.60" height="2.60" fill="#5a8ed6"/>
<rect x="658.40" y="152.82" width="1.60" height="1.80" fill="#d86a5a"/>
<text x="664.10" y="154.26" font-size="5.10" fill="#2a2a2a" stroke="#2a2a2a" stroke-width="0.12" textLength="39.60" lengthAdjust="spacingAndGlyphs">helical gear_3_ai-10</text>
<path d="M647.40,157.13 l2.2,1.5 l-2.2,1.5 z" fill="#666" stroke="#222" stroke-width="0.45"/>
<rect x="652.50" y="156.73" width="3.80" height="3.80" fill="#2f86d6"/>
<rect x="658.20" y="156.23" width="2.60" height="2.60" fill="#e0483a"/>
<rect x="659.40" y="158.23" width="2.60" height="2.60" fill="#5a8ed6"/>
<rect x="658.40" y="159.03" width="1.60" height="1.80" fill="#d86a5a"/>
<text x="664.10" y="160.47" font-size="5.10" fill="#2a2a2a" stroke="#2a2a2a" stroke-width="0.12" textLength="39.40" lengthAdjust="spacingAndGlyphs">helical gear_3_ai-11</text>
<path d="M647.40,163.34 l2.2,1.5 l-2.2,1.5 z" fill="#666" stroke="#222" stroke-width="0.45"/>
<rect x="652.50" y="162.94" width="3.80" height="3.80" fill="#2f86d6"/>
<rect x="658.20" y="162.44" width="2.60" height="2.60" fill="#e0483a"/>
<rect x="659.40" y="164.44" width="2.60" height="2.60" fill="#5a8ed6"/>
<rect x="658.40" y="165.24" width="1.60" height="1.80" fill="#d86a5a"/>
<rect x="663.50" y="161.94" width="19.00" height="5.80" fill="#173f8c"/>
<text x="664.10" y="166.68" font-size="5.10" fill="#fff" stroke="#fff" stroke-width="0.12" textLength="17.00" lengthAdjust="spacingAndGlyphs">shaft 1-1</text>
<path d="M647.40,169.55 l2.2,1.5 l-2.2,1.5 z" fill="#666" stroke="#222" stroke-width="0.45"/>
<rect x="652.50" y="169.15" width="3.80" height="3.80" fill="#2f86d6"/>
<rect x="658.20" y="168.65" width="2.60" height="2.60" fill="#e0483a"/>
<rect x="659.40" y="170.65" width="2.60" height="2.60" fill="#5a8ed6"/>
<rect x="658.40" y="171.45" width="1.60" height="1.80" fill="#d86a5a"/>
<text x="664.10" y="172.89" font-size="5.10" fill="#2a2a2a" stroke="#2a2a2a" stroke-width="0.12" textLength="76.40" lengthAdjust="spacingAndGlyphs">angular contact ball bearing_68_skf-1</text>
<path d="M647.40,175.76 l2.2,1.5 l-2.2,1.5 z" fill="#666" stroke="#222" stroke-width="0.45"/>
<rect x="652.50" y="175.36" width="3.80" height="3.80" fill="#2f86d6"/>
<rect x="658.20" y="174.86" width="2.60" height="2.60" fill="#e0483a"/>
<rect x="659.40" y="176.86" width="2.60" height="2.60" fill="#5a8ed6"/>
<rect x="658.40" y="177.66" width="1.60" height="1.80" fill="#d86a5a"/>
<text x="664.10" y="179.10" font-size="5.10" fill="#2a2a2a" stroke="#2a2a2a" stroke-width="0.12" textLength="76.40" lengthAdjust="spacingAndGlyphs">angular contact ball bearing_68_skf-2</text>
<path d="M647.40,181.98 l2.2,1.5 l-2.2,1.5 z" fill="#666" stroke="#222" stroke-width="0.45"/>
<rect x="652.50" y="181.58" width="3.80" height="3.80" fill="#2f86d6"/>
<rect x="658.20" y="181.08" width="2.60" height="2.60" fill="#e0483a"/>
<rect x="659.40" y="183.08" width="2.60" height="2.60" fill="#5a8ed6"/>
<rect x="658.40" y="183.88" width="1.60" height="1.80" fill="#d86a5a"/>
<text x="664.10" y="185.31" font-size="5.10" fill="#2a2a2a" stroke="#2a2a2a" stroke-width="0.12" textLength="76.40" lengthAdjust="spacingAndGlyphs">angular contact ball bearing_68_skf-3</text>
<path d="M647.40,188.19 l2.2,1.5 l-2.2,1.5 z" fill="#666" stroke="#222" stroke-width="0.45"/>
<rect x="652.50" y="187.79" width="3.80" height="3.80" fill="#2f86d6"/>
<rect x="658.20" y="187.29" width="2.60" height="2.60" fill="#e0483a"/>
<rect x="659.40" y="189.29" width="2.60" height="2.60" fill="#5a8ed6"/>
<rect x="658.40" y="190.09" width="1.60" height="1.80" fill="#d86a5a"/>
<text x="664.10" y="191.52" font-size="5.10" fill="#2a2a2a" stroke="#2a2a2a" stroke-width="0.12" textLength="76.40" lengthAdjust="spacingAndGlyphs">angular contact ball bearing_68_skf-4</text>
<path d="M647.40,194.40 l2.2,1.5 l-2.2,1.5 z" fill="#666" stroke="#222" stroke-width="0.45"/>
<rect x="652.50" y="194.00" width="3.80" height="3.80" fill="#2f86d6"/>
<rect x="658.20" y="193.50" width="2.60" height="2.60" fill="#e0483a"/>
<rect x="659.40" y="195.50" width="2.60" height="2.60" fill="#5a8ed6"/>
<rect x="658.40" y="196.30" width="1.60" height="1.80" fill="#d86a5a"/>
<text x="664.10" y="197.73" font-size="5.10" fill="#2a2a2a" stroke="#2a2a2a" stroke-width="0.12" textLength="76.40" lengthAdjust="spacingAndGlyphs">angular contact ball bearing_68_skf-5</text>
<path d="M647.40,200.61 l2.2,1.5 l-2.2,1.5 z" fill="#666" stroke="#222" stroke-width="0.45"/>
<rect x="652.50" y="200.21" width="3.80" height="3.80" fill="#2f86d6"/>
<rect x="658.20" y="199.71" width="2.60" height="2.60" fill="#e0483a"/>
<rect x="659.40" y="201.71" width="2.60" height="2.60" fill="#5a8ed6"/>
<rect x="658.40" y="202.51" width="1.60" height="1.80" fill="#d86a5a"/>
<text x="664.10" y="203.94" font-size="5.10" fill="#2a2a2a" stroke="#2a2a2a" stroke-width="0.12" textLength="76.40" lengthAdjust="spacingAndGlyphs">angular contact ball bearing_68_skf-6</text>
<path d="M647.40,206.82 l2.2,1.5 l-2.2,1.5 z" fill="#666" stroke="#222" stroke-width="0.45"/>
<rect x="652.50" y="206.42" width="3.80" height="3.80" fill="#2f86d6"/>
<rect x="658.20" y="205.92" width="2.60" height="2.60" fill="#e0483a"/>
<rect x="659.40" y="207.92" width="2.60" height="2.60" fill="#5a8ed6"/>
<rect x="658.40" y="208.72" width="1.60" height="1.80" fill="#d86a5a"/>
<text x="664.10" y="210.16" font-size="5.10" fill="#2a2a2a" stroke="#2a2a2a" stroke-width="0.12" textLength="76.40" lengthAdjust="spacingAndGlyphs">angular contact ball bearing_68_skf-7</text>
<path d="M647.40,213.03 l2.2,1.5 l-2.2,1.5 z" fill="#666" stroke="#222" stroke-width="0.45"/>
<rect x="652.50" y="212.63" width="3.80" height="3.80" fill="#2f86d6"/>
<rect x="658.20" y="212.13" width="2.60" height="2.60" fill="#e0483a"/>
<rect x="659.40" y="214.13" width="2.60" height="2.60" fill="#5a8ed6"/>
<rect x="658.40" y="214.93" width="1.60" height="1.80" fill="#d86a5a"/>
<text x="664.10" y="216.37" font-size="5.10" fill="#2a2a2a" stroke="#2a2a2a" stroke-width="0.12" textLength="76.40" lengthAdjust="spacingAndGlyphs">angular contact ball bearing_68_skf-8</text>
<path d="M647.40,219.24 l2.2,1.5 l-2.2,1.5 z" fill="#666" stroke="#222" stroke-width="0.45"/>
<rect x="652.50" y="218.84" width="3.80" height="3.80" fill="#2f86d6"/>
<rect x="658.20" y="218.34" width="2.60" height="2.60" fill="#e0483a"/>
<rect x="659.40" y="220.34" width="2.60" height="2.60" fill="#5a8ed6"/>
<rect x="658.40" y="221.14" width="1.60" height="1.80" fill="#d86a5a"/>
<text x="664.10" y="222.58" font-size="5.10" fill="#2a2a2a" stroke="#2a2a2a" stroke-width="0.12" textLength="16.30" lengthAdjust="spacingAndGlyphs">Drum-1</text>
<path d="M647.40,225.45 l2.2,1.5 l-2.2,1.5 z" fill="#666" stroke="#222" stroke-width="0.45"/>
<rect x="652.50" y="225.05" width="3.80" height="3.80" fill="#2f86d6"/>
<rect x="658.20" y="224.55" width="2.60" height="2.60" fill="#e0483a"/>
<rect x="659.40" y="226.55" width="2.60" height="2.60" fill="#5a8ed6"/>
<rect x="658.40" y="227.35" width="1.60" height="1.80" fill="#d86a5a"/>
<text x="664.10" y="228.79" font-size="5.10" fill="#2a2a2a" stroke="#2a2a2a" stroke-width="0.12" textLength="33.00" lengthAdjust="spacingAndGlyphs">GC_motive_01-1</text>
<path d="M647.40,231.66 l2.2,1.5 l-2.2,1.5 z" fill="#666" stroke="#222" stroke-width="0.45"/>
<rect x="652.50" y="231.26" width="3.80" height="3.80" fill="#2f86d6"/>
<rect x="658.20" y="230.76" width="2.60" height="2.60" fill="#e0483a"/>
<rect x="659.40" y="232.76" width="2.60" height="2.60" fill="#5a8ed6"/>
<rect x="658.40" y="233.56" width="1.60" height="1.80" fill="#d86a5a"/>
<text x="664.10" y="235.00" font-size="5.10" fill="#2a2a2a" stroke="#2a2a2a" stroke-width="0.12" textLength="15.00" lengthAdjust="spacingAndGlyphs">body-1</text>
<path d="M647.40,237.88 l2.2,1.5 l-2.2,1.5 z" fill="#666" stroke="#222" stroke-width="0.45"/>
<rect x="652.50" y="237.47" width="3.80" height="3.80" fill="#2f86d6"/>
<rect x="658.20" y="236.97" width="2.60" height="2.60" fill="#e0483a"/>
<rect x="659.40" y="238.97" width="2.60" height="2.60" fill="#5a8ed6"/>
<rect x="658.40" y="239.78" width="1.60" height="1.80" fill="#d86a5a"/>
<text x="664.10" y="241.21" font-size="5.10" fill="#2a2a2a" stroke="#2a2a2a" stroke-width="0.12" textLength="44.30" lengthAdjust="spacingAndGlyphs">NORDEX-EAG-A2-9-1</text>
<path d="M647.40,244.09 l2.2,1.5 l-2.2,1.5 z" fill="#666" stroke="#222" stroke-width="0.45"/>
<rect x="652.50" y="243.69" width="3.80" height="3.80" fill="#2f86d6"/>
<rect x="658.20" y="243.19" width="2.60" height="2.60" fill="#e0483a"/>
<rect x="659.40" y="245.19" width="2.60" height="2.60" fill="#5a8ed6"/>
<rect x="658.40" y="245.99" width="1.60" height="1.80" fill="#d86a5a"/>
<text x="664.10" y="247.42" font-size="5.10" fill="#2a2a2a" stroke="#2a2a2a" stroke-width="0.12" textLength="26.00" lengthAdjust="spacingAndGlyphs">load brake-1</text>
<path d="M647.40,250.30 l2.2,1.5 l-2.2,1.5 z" fill="#666" stroke="#222" stroke-width="0.45"/>
<rect x="652.50" y="249.90" width="3.80" height="3.80" fill="#2f86d6"/>
<rect x="658.20" y="249.40" width="2.60" height="2.60" fill="#e0483a"/>
<rect x="659.40" y="251.40" width="2.60" height="2.60" fill="#5a8ed6"/>
<rect x="658.40" y="252.20" width="1.60" height="1.80" fill="#d86a5a"/>
<text x="664.10" y="253.63" font-size="5.10" fill="#2a2a2a" stroke="#2a2a2a" stroke-width="0.12" textLength="44.30" lengthAdjust="spacingAndGlyphs">NORDEX-EAG-A1-1-1</text>
<rect x="116.20" y="63.00" width="3.80" height="292.00" fill="#fff"/>
<line x1="116.40" y1="63.00" x2="116.40" y2="398.00" stroke="#dcdcdc" stroke-width="0.40"/>
<rect x="117.00" y="63.00" width="514.00" height="8.20" fill="#fff"/>
<line x1="117.00" y1="63.70" x2="630.40" y2="63.70" stroke="#d6d6d6" stroke-width="0.60"/>
<polygon points="119.40,70.90 125.20,64.90 191.20,64.90 191.20,70.90" fill="#df7d26"/>
<line x1="119.40" y1="70.90" x2="125.20" y2="65.00" stroke="#f3c79c" stroke-width="0.50"/>
<text x="132.00" y="69.55" font-size="4.30" font-weight="bold" fill="#fbe6cf" stroke="#fbe6cf" stroke-width="0.12" textLength="47.60" lengthAdjust="spacingAndGlyphs">Hoist Assembly.SLDASM</text>
<rect x="186.20" y="66.60" width="2.60" height="2.80" fill="#e0603a"/>
<text x="186.70" y="69.22" font-size="3.40" fill="#fff" stroke="#fff" stroke-width="0.12" textLength="1.60" lengthAdjust="spacingAndGlyphs">×</text>
<line x1="117.00" y1="71.20" x2="630.40" y2="71.20" stroke="#9a9a9a" stroke-width="0.70"/>
<line x1="119.60" y1="71.00" x2="119.60" y2="353.00" stroke="#8a8a8a" stroke-width="0.60"/>
<line x1="630.00" y1="71.00" x2="630.00" y2="353.00" stroke="#dadada" stroke-width="0.60"/>
<line x1="119.00" y1="352.90" x2="630.40" y2="352.90" stroke="#f4f4f4" stroke-width="0.80"/>
<rect x="624.20" y="65.00" width="5.00" height="4.80" fill="#5a5a5a"/>
<path d="M625.4,66.6 l2.6,0 l-1.3,1.7 z" fill="#e8e8e8"/>
<rect x="117.00" y="353.40" width="514.00" height="4.00" fill="#fff"/>
<rect x="118.00" y="357.20" width="512.40" height="6.50" fill="#df7d26"/>
<text x="120.00" y="362.33" font-size="4.80" fill="#fbe6cf" stroke="#fbe6cf" stroke-width="0.12" textLength="16.40" lengthAdjust="spacingAndGlyphs">Ausgabe</text>
<rect x="618.40" y="358.80" width="1.80" height="2.40" fill="none" stroke="#fbe6cf" stroke-width="0.4"/>
<rect x="624.80" y="358.00" width="4.60" height="4.80" fill="#e2603a"/>
<line x1="625.90" y1="359.60" x2="627.50" y2="361.20" stroke="#fff" stroke-width="0.50"/>
<line x1="627.50" y1="359.60" x2="625.90" y2="361.20" stroke="#fff" stroke-width="0.50"/>
<rect x="118.00" y="363.70" width="512.40" height="18.60" fill="#fff"/>
<line x1="118.20" y1="363.70" x2="118.20" y2="388.00" stroke="#b9b9b9" stroke-width="0.50"/>
<text x="121.00" y="370.76" font-size="4.90" fill="#333" stroke="#333" stroke-width="0.12" textLength="111.50" lengthAdjust="spacingAndGlyphs">Laden abgeschlossen (T3) 13:50:56 - Dauer: 03.502</text>
<rect x="623.60" y="363.70" width="6.60" height="18.60" fill="#f3f3f3"/>
<path d="M625.4,369.4 l1.3,-1.3 l1.3,1.3" fill="none" stroke="#444" stroke-width="0.6"/>
<path d="M625.4,377 l1.3,1.3 l1.3,-1.3" fill="none" stroke="#444" stroke-width="0.6"/>
<rect x="118.40" y="382.30" width="505.00" height="5.00" fill="#ececec"/>
<path d="M122.6,383.8 l-1,1 l1,1" fill="none" stroke="#aaa" stroke-width="0.4"/>
<path d="M620,383.8 l1,1 l-1,1" fill="none" stroke="#aaa" stroke-width="0.4"/>
<rect x="117.00" y="387.40" width="514.00" height="11.00" fill="#fff"/>
<path d="M121.6,390.8 l-1.2,1.4 l1.2,1.4 z" fill="#222"/>
<path d="M624.4,391 l1.3,1.4 l-1.3,1.4 z" fill="#222"/>
<polygon points="126.60,389.20 161.00,389.20 161.00,395.80 133.40,395.80" fill="#df7d26"/>
<text x="137.20" y="394.13" font-size="4.80" fill="#fff" stroke="#fff" stroke-width="0.12" textLength="20.40" lengthAdjust="spacingAndGlyphs">Fortschritt</text>
<rect x="163.90" y="389.20" width="30.40" height="6.60" fill="#fff" stroke="#c9c9c9" stroke-width="0.5"/>
<text x="167.90" y="394.13" font-size="4.80" fill="#222" stroke="#222" stroke-width="0.12" textLength="22.60" lengthAdjust="spacingAndGlyphs">Information</text>
<rect x="196.00" y="389.20" width="30.00" height="6.60" fill="#fff" stroke="#c9c9c9" stroke-width="0.5"/>
<text x="201.20" y="394.13" font-size="4.80" fill="#222" stroke="#222" stroke-width="0.12" textLength="19.60" lengthAdjust="spacingAndGlyphs">Allgemein</text>
<rect x="0.00" y="397.60" width="632.00" height="6.40" fill="#fff"/>
<text x="271.00" y="402.42" font-size="4.50" fill="#666" stroke="#666" stroke-width="0.12" textLength="70.00" lengthAdjust="spacingAndGlyphs">Breite: 1310, Höhe: 722, X: 255, Y: 4</text>
<text x="510.60" y="402.42" font-size="4.50" fill="#666" stroke="#666" stroke-width="0.12" textLength="54.60" lengthAdjust="spacingAndGlyphs">1/52 Selektierte Geometrien</text>
<text x="628.60" y="402.42" font-size="4.50" fill="#666" stroke="#666" stroke-width="0.12" textLength="33.40" lengthAdjust="spacingAndGlyphs">SolidWorks 2016</text>
<line x1="268.60" y1="398.60" x2="268.60" y2="403.40" stroke="#e2e2e2" stroke-width="0.50"/>
<line x1="388.20" y1="398.60" x2="388.20" y2="403.40" stroke="#e2e2e2" stroke-width="0.50"/>
<line x1="508.00" y1="398.60" x2="508.00" y2="403.40" stroke="#e2e2e2" stroke-width="0.50"/>
<line x1="626.00" y1="398.60" x2="626.00" y2="403.40" stroke="#e2e2e2" stroke-width="0.50"/>
</svg>
</body></html>
